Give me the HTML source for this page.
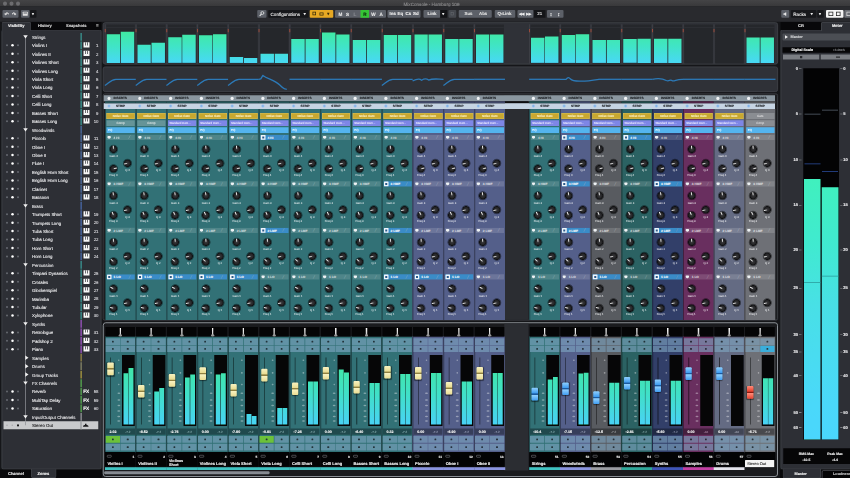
<!DOCTYPE html>
<html><head><meta charset="utf-8"><title>MixConsole - Hamburg 109</title>
<style>
html,body{margin:0;padding:0;background:#151619;}
body{width:850px;height:478px;overflow:hidden;position:relative;font-family:"Liberation Sans",sans-serif;text-rendering:geometricPrecision;}
#app{position:absolute;left:0;top:0;width:850px;height:478px;overflow:hidden;background:#151619;filter:contrast(1)}
#z{position:absolute;left:0;top:0;width:3400px;height:1912px;transform:scale(0.25);transform-origin:0 0;}
#z div,#z svg,#z i,#z b{position:absolute;font-style:normal;font-weight:normal;display:block}
#z .ch{top:0;width:0;height:0}
#z b{left:0;width:0;height:0}
#z .c0{--c:#327176;--d25:#265558;--d35:#20494d;--d45:#1c3e41;--d55:#163335;--l17:#4f8589;--l70:#c6d7d9;--l25:#659498;--l38:#80a7aa;--l45:#8eb1b4;--l62:#b1c9cb;--bc:#6192a5;--bg:#22333a;--st:#3fc3c2;}
#z .c1{--c:#545f8a;--d25:#3f4768;--d35:#373e5a;--d45:#2e344c;--d55:#262b3e;--l17:#6c759a;--l70:#cfd2de;--l25:#7f87a7;--l38:#959cb6;--l45:#a1a7bf;--l62:#bec2d3;--bc:#6e8bad;--bg:#26313d;--st:#8a94e0;}
#z .c2{--c:#585b60;--d25:#424448;--d35:#393b3e;--d45:#303235;--d55:#28292b;--l17:#6f7276;--l70:#d0d1d2;--l25:#828488;--l38:#97999c;--l45:#a3a5a8;--l62:#c0c1c3;--bc:#70899c;--bg:#273037;--st:#9a9ca2;}
#z .c3{--c:#2b6263;--d25:#204a4a;--d35:#1c4040;--d45:#183636;--d55:#132c2d;--l17:#497879;--l70:#c4d3d3;--l25:#60898a;--l38:#7c9e9e;--l45:#8aa9a9;--l62:#aec3c4;--bc:#5e8c9d;--bg:#213137;--st:#2fa89a;}
#z .c4{--c:#323f69;--d25:#262f4f;--d35:#202944;--d45:#1c233a;--d55:#161c2f;--l17:#4f5a7e;--l70:#c6c9d5;--l25:#656f8e;--l38:#8088a2;--l45:#8e95ac;--l62:#b1b6c6;--bc:#617ea0;--bg:#222c38;--st:#3f55b8;}
#z .c5{--c:#692f5f;--d25:#4f2347;--d35:#441f3e;--d45:#3a1a34;--d55:#2f152b;--l17:#7e4c75;--l70:#d5c5d2;--l25:#8e6387;--l38:#a27e9c;--l45:#ac8da7;--l62:#c6b0c2;--bc:#77789c;--bg:#2a2a37;--st:#c23fa2;}
#z .c6{--c:#646b83;--d25:#4b5062;--d35:#414655;--d45:#373b48;--d55:#2d303b;--l17:#7a8094;--l70:#d4d6dc;--l25:#8b90a2;--l38:#9fa3b2;--l45:#aaaebb;--l62:#c4c7d0;--bc:#7590aa;--bg:#29323b;--st:#e4e4ec;}
#z .c7{--c:#6e7076;--d25:#525458;--d35:#48494d;--d45:#3d3e41;--d55:#313235;--l17:#828489;--l70:#d6d7d9;--l25:#929498;--l38:#a5a6aa;--l45:#afb0b4;--l62:#c8c9cb;--bc:#7992a5;--bg:#2a333a;--st:#1a1b1e;}
#z .g1{background:linear-gradient(#40eaa0 0%,#40e4c8 50%,#48d8f6 100%);background-size:100% 127.6px;background-position:bottom;width:53.6px}
#z .g2{background:linear-gradient(#40e6a6 0%,#40e0c8 48%,#48d2f4 100%);background-size:100% 234px;background-position:bottom;width:19.6px}
#z .capy{left:13.2px;width:25.6px;height:50.4px;border-radius:4px;box-shadow:0 2.4px 4px 1.2px rgba(0,0,0,.45);background:linear-gradient(#f8f2c0 0%,#e9dc92 42%,#8f8040 47%,#8f8040 53%,#f8f2c0 58%,#e9dc92 100%)}
#z .capb{left:13.2px;width:25.6px;height:50.4px;border-radius:4px;box-shadow:0 2.4px 4px 1.2px rgba(0,0,0,.45);background:linear-gradient(#8fd0ff 0%,#3f9cf0 42%,#1a5aa0 47%,#1a5aa0 53%,#8fd0ff 58%,#3f9cf0 100%)}
#z .capr{left:13.2px;width:25.6px;height:50.4px;border-radius:4px;box-shadow:0 2.4px 4px 1.2px rgba(0,0,0,.45);background:linear-gradient(#ff8a78 0%,#e8422f 42%,#8a1a10 47%,#8a1a10 53%,#ff8a78 58%,#e8422f 100%)}
#z .mbg{left:9.6px;top:98.4px;width:112.4px;height:154.4px;background:#25272b;background-image:repeating-linear-gradient(#25272b 0,#25272b 9.6px,#2c2e33 9.6px,#2c2e33 12px)}
#z .msp{left:2.8px;top:96.8px;width:4px;height:157.6px;background:#3c3e44;}
#z .mrt{left:2.8px;top:116px;width:4px;height:12.8px;background:#9a4a3a;}
#z .r1{left:3.6px;top:405.2px;width:123.08px;height:7.6px;background:var(--d25);}
#z .r2{left:3.6px;top:435.6px;width:123.08px;height:844px;background:var(--c);}
#z .r3{left:3.6px;top:435.6px;width:4px;height:844px;background:var(--d35);}
#z .ic{left:13.6px;top:386.8px;width:12.8px;height:12.8px;background:#f2f4f6;border-radius:50%}
#z .it{left:38px;top:386.16px;font-size:12.4px;line-height:14.88px;color:#1d2024;white-space:nowrap;font-weight:bold;-webkit-text-stroke:0.48px;}
#z .sc{left:13.6px;top:417.6px;width:12.8px;height:12.8px;background:#7fb0e6;border-radius:50%;border:2px solid #a8c8ee;box-sizing:border-box}
#z .stx{left:9.6px;top:416.96px;font-size:12.4px;line-height:14.88px;color:#1d2024;white-space:nowrap;font-weight:bold;-webkit-text-stroke:0.48px;width:112.8px;text-align:center;}
#z .s1{left:10px;top:452px;width:112.8px;height:23.6px;background:#c8a830;border:2px solid #d6bd58;box-sizing:border-box}
#z .s1t{left:10px;top:456.8px;font-size:12px;line-height:14.4px;color:#f6e9b8;white-space:nowrap;font-weight:bold;-webkit-text-stroke:0.48px;width:112.8px;text-align:center;}
#z .s2c{left:10px;top:480.8px;width:112.8px;height:22.8px;background:var(--l25);}
#z .s2ct{left:10px;top:485.2px;font-size:12px;line-height:14.4px;color:#d4e0e0;white-space:nowrap;-webkit-text-stroke:0.4px;width:112.8px;text-align:center;}
#z .s3{left:10px;top:509.2px;width:112.8px;height:22.8px;background:#54b4ee;}
#z .s3t{left:16px;top:513.6px;font-size:12px;line-height:14.4px;color:#e8f6ff;white-space:nowrap;-webkit-text-stroke:0.4px;}
#z .bh{left:10px;top:-10.4px;width:112.8px;height:20.8px;background:var(--l17);}
#z .ba{background:#3a8cc8}
#z .bi{left:14.4px;top:-5.2px;width:12.8px;height:10.4px;background:#eef2f4;border-radius:2.4px 2.4px 5.6px 5.6px}
#z .bn{left:38.4px;top:-7.68px;font-size:12.8px;line-height:15.36px;color:var(--l70);white-space:nowrap;font-weight:bold;-webkit-text-stroke:0.48px;}
#z .bs{left:98px;top:-7.2px;font-size:12px;line-height:14.4px;color:var(--l45);white-space:nowrap;-webkit-text-stroke:0.4px;}
#z .k0{left:18.4px;top:27.2px;width:40px;height:40px;background:radial-gradient(circle closest-side at 50% 50%,#38383b 0,#28282a 40%,#19191b 60%,#101012 66%,var(--d55) 72%,var(--d35) 86%,var(--c) 100%);border-radius:50%}
#z .p0{left:36.4px;top:33.6px;width:4px;height:13.6px;background:linear-gradient(#fff,#d8d8d8 70%,rgba(200,200,200,.2));transform-origin:50% 100%;transform:rotate(-5deg)}
#z .l0{left:6.4px;top:70.48px;font-size:11.2px;line-height:13.44px;color:var(--l70);white-space:nowrap;-webkit-text-stroke:0.4px;width:64px;text-align:center;}
#z .k1{left:74.4px;top:83.6px;width:40px;height:40px;background:radial-gradient(circle closest-side at 50% 50%,#38383b 0,#28282a 40%,#19191b 60%,#101012 66%,var(--d55) 72%,var(--d35) 86%,var(--c) 100%);border-radius:50%}
#z .p1{left:92.4px;top:90px;width:4px;height:13.6px;background:linear-gradient(#fff,#d8d8d8 70%,rgba(200,200,200,.2));transform-origin:50% 100%;transform:rotate(-100deg)}
#z .l1{left:62.4px;top:125.28px;font-size:11.2px;line-height:13.44px;color:var(--l70);white-space:nowrap;-webkit-text-stroke:0.4px;width:64px;text-align:center;}
#z .k2{left:17.6px;top:105.2px;width:40px;height:40px;background:radial-gradient(circle closest-side at 50% 50%,#38383b 0,#28282a 40%,#19191b 60%,#101012 66%,var(--d55) 72%,var(--d35) 86%,var(--c) 100%);border-radius:50%}
#z .p2{left:35.6px;top:111.6px;width:4px;height:13.6px;background:linear-gradient(#fff,#d8d8d8 70%,rgba(200,200,200,.2));transform-origin:50% 100%;transform:rotate(78deg)}
#z .l2{left:5.6px;top:144.08px;font-size:11.2px;line-height:13.44px;color:var(--l70);white-space:nowrap;-webkit-text-stroke:0.4px;width:64px;text-align:center;}
#z .bk{left:12px;top:-9.2px;width:18.4px;height:18.4px;background:#f2f6fa;border-radius:2px}
#z .bk2{left:17.2px;top:-4px;width:8px;height:8px;background:#2a5a8a;}
#z .f1{left:3.6px;top:1345.6px;width:122.28px;height:464px;background:var(--c);}
#z .f2{left:3.6px;top:1345.6px;width:4px;height:464px;background:var(--d35);}
#z .f3{left:5.2px;top:1308px;width:118.8px;height:37.6px;background:#050506;}
#z .f4{left:62.8px;top:1312px;width:5.2px;height:32.8px;background:linear-gradient(#fff,#bbb);}
#z .f5{left:59.2px;top:1336.8px;width:12.4px;height:8px;background:#9a9a9a;border-radius:50% 50% 0 0}
#z .b00{left:6.8px;top:1352.8px;width:57.2px;height:28px;background:var(--bc);}
#z .d00{left:31.8px;top:1363.2px;width:7.2px;height:7.2px;background:var(--bg);border-radius:30%}
#z .b01{left:66.4px;top:1352.8px;width:57.2px;height:28px;background:var(--bc);}
#z .d01{left:91.4px;top:1363.2px;width:7.2px;height:7.2px;background:var(--bg);border-radius:30%}
#z .b10{left:6.8px;top:1383.2px;width:57.2px;height:24.8px;background:var(--bc);}
#z .d10{left:31.8px;top:1392px;width:7.2px;height:7.2px;background:var(--bg);border-radius:30%}
#z .b11{left:66.4px;top:1383.2px;width:57.2px;height:24.8px;background:var(--bc);}
#z .d11{left:91.4px;top:1392px;width:7.2px;height:7.2px;background:var(--bg);border-radius:30%}
#z .b20{left:6.8px;top:1743.6px;width:57.2px;height:27.2px;background:var(--bc);}
#z .d20{left:31.8px;top:1753.6px;width:7.2px;height:7.2px;background:var(--bg);border-radius:30%}
#z .b21{left:66.4px;top:1743.6px;width:57.2px;height:27.2px;background:var(--bc);}
#z .d21{left:91.4px;top:1753.6px;width:7.2px;height:7.2px;background:var(--bg);border-radius:30%}
#z .b30{left:6.8px;top:1774.8px;width:57.2px;height:27.6px;background:var(--bc);}
#z .d30{left:31.8px;top:1785px;width:7.2px;height:7.2px;background:var(--bg);border-radius:30%}
#z .b31{left:66.4px;top:1774.8px;width:57.2px;height:27.6px;background:var(--bc);}
#z .d31{left:91.4px;top:1785px;width:7.2px;height:7.2px;background:var(--bg);border-radius:30%}
#z .ft{left:24.8px;top:1430px;width:3.2px;height:268px;background:var(--d55);}
#z .m0{left:56px;top:1438px;width:6.4px;height:6.4px;background:var(--l38);border-radius:40%}
#z .m1{left:56px;top:1488.4px;width:6.4px;height:6.4px;background:var(--l38);border-radius:40%}
#z .m2{left:56px;top:1534.8px;width:6.4px;height:6.4px;background:var(--l38);border-radius:40%}
#z .m3{left:53.6px;top:1570px;width:11.2px;height:6.4px;background:var(--l38);border-radius:40%}
#z .m4{left:53.6px;top:1596.8px;width:11.2px;height:6.4px;background:var(--l38);border-radius:40%}
#z .m5{left:53.6px;top:1618.8px;width:11.2px;height:6.4px;background:var(--l38);border-radius:40%}
#z .m6{left:53.2px;top:1640.8px;width:12px;height:6.4px;background:var(--l38);border-radius:40%}
#z .m7{left:53.2px;top:1662.8px;width:12px;height:6.4px;background:var(--l38);border-radius:40%}
#z .m8{left:53.2px;top:1680.8px;width:12px;height:6.4px;background:var(--l38);border-radius:40%}
#z .fm{left:72px;top:1420px;width:51.2px;height:284.4px;background:#060607;}
#z .fv{left:6.8px;top:1714px;width:116.8px;height:24.8px;background:var(--d35);}
#z .fvt{left:6.8px;top:1717.76px;font-size:14.4px;line-height:17.28px;color:#f6f6f6;white-space:nowrap;font-weight:bold;-webkit-text-stroke:0.48px;width:58px;text-align:center;}
#z .fvu{left:66.4px;top:1719.2px;font-size:12px;line-height:14.4px;color:var(--l38);white-space:nowrap;-webkit-text-stroke:0.4px;width:57.2px;text-align:center;}
#z .fn{left:3.6px;top:1807.6px;width:122.28px;height:59.2px;background:#030304;}
#z .fi{left:12px;top:1820px;width:18.4px;height:10.4px;background:transparent;border:2.4px solid #8a8d92;border-radius:3.2px;box-sizing:border-box}
#z .fnum{left:80px;top:1817.52px;font-size:12.8px;line-height:15.36px;color:#e6e6e6;white-space:nowrap;font-weight:bold;-webkit-text-stroke:0.48px;width:41.2px;text-align:right;}
#z .nm{left:13.6px;top:1843.6px;font-size:16px;line-height:19.2px;color:#f4f4f4;white-space:nowrap;font-weight:bold;-webkit-text-stroke:0.48px;}
#z .fs{left:3.6px;top:1868.8px;width:124.28px;height:11.6px;background:var(--st);}
#z .s2{left:10px;top:480.8px;width:112.8px;height:22.8px;background:#7e86e6;}
#z .s2t{left:16px;top:485.44px;font-size:11.6px;line-height:13.92px;color:#e6e6ff;white-space:nowrap;-webkit-text-stroke:0.4px;}
#z .na{left:13.6px;top:1836.72px;font-size:14.8px;line-height:17.76px;color:#f2f2f2;white-space:nowrap;font-weight:bold;-webkit-text-stroke:0.48px;}
#z .nb{left:13.6px;top:1850.72px;font-size:14.8px;line-height:17.76px;color:#f2f2f2;white-space:nowrap;font-weight:bold;-webkit-text-stroke:0.48px;}
#z .s1g{left:10px;top:452px;width:112.8px;height:23.6px;background:#8a8d92;}
#z .s1gt{left:10px;top:456.8px;font-size:12px;line-height:14.4px;color:#d4d4d6;white-space:nowrap;-webkit-text-stroke:0.4px;width:112.8px;text-align:center;}
#z .s2g{left:10px;top:480.8px;width:112.8px;height:22.8px;background:#8a8d92;}
#z .s2gt{left:10px;top:485.2px;font-size:12px;line-height:14.4px;color:#d4d4d6;white-space:nowrap;-webkit-text-stroke:0.4px;width:112.8px;text-align:center;}
#z .so{left:4.8px;top:1840px;width:117.2px;height:30.4px;background:#f4f4f4;border-radius:2.4px;box-shadow:0 0 6px #000}
#z .sot{left:14px;top:1845.44px;font-size:15.6px;line-height:18.72px;color:#222;white-space:nowrap;-webkit-text-stroke:0.4px;}
</style></head><body><div id="app"><div id="z">
<div style="left:0px;top:0px;width:3400px;height:26.4px;background:linear-gradient(#444446,#38383a);"></div>
<div style="left:11.6px;top:6px;width:16.8px;height:16.8px;background:#6c6c6f;border-radius:50%"></div>
<div style="left:37.6px;top:6px;width:16.8px;height:16.8px;background:#6c6c6f;border-radius:50%"></div>
<div style="left:63.6px;top:6px;width:16.8px;height:16.8px;background:#6c6c6f;border-radius:50%"></div>
<div style="left:1614px;top:4.96px;font-size:18.4px;line-height:22.08px;color:#8e8e90;white-space:nowrap;-webkit-text-stroke:0.4px;">MixConsole - Hamburg 109</div>
<div style="left:0px;top:26.4px;width:3400px;height:60.4px;background:#292a2e;"></div>
<div style="left:10px;top:40px;width:64px;height:31.2px;background:#5c6068;border-radius:4px"></div>
<div style="left:18px;top:43.6px;font-size:20px;line-height:24px;color:#d8d8d8;white-space:nowrap;font-weight:bold;-webkit-text-stroke:0.48px;">&#8630;</div>
<div style="left:48px;top:43.6px;font-size:20px;line-height:24px;color:#d8d8d8;white-space:nowrap;font-weight:bold;-webkit-text-stroke:0.48px;">&#8631;</div>
<div style="left:84px;top:40px;width:34px;height:31.2px;background:#5c6068;border-radius:4px"></div>
<div style="left:91.2px;top:47.2px;width:20px;height:16px;background:#e0e0e0;border-radius:2px"></div>
<div style="left:94.4px;top:50.4px;width:13.6px;height:4px;background:#5c6068;"></div>
<div style="left:120px;top:40px;width:26px;height:31.2px;background:#17181b;border-radius:4px"></div>
<div style="left:127.6px;top:46.88px;font-size:15.2px;line-height:18.24px;color:#e8e8e8;white-space:nowrap;font-weight:bold;-webkit-text-stroke:0.48px;">&#9662;</div>
<div style="left:1029.2px;top:40px;width:36.4px;height:31.2px;background:#5c6068;border-radius:4px"></div>
<div style="left:1042.4px;top:44.8px;width:14.4px;height:14.4px;background:transparent;border:3.2px solid #f2f2f2;border-radius:50%;box-sizing:border-box"></div>
<div style="left:1036.8px;top:58.4px;width:10.4px;height:3.6px;background:#f2f2f2;transform:rotate(-45deg)"></div>
<div style="left:1072.8px;top:40px;width:162px;height:31.2px;background:#16171a;border-radius:4px"></div>
<div style="left:1082px;top:44.56px;font-size:18.4px;line-height:22.08px;color:#f0f0f0;white-space:nowrap;-webkit-text-stroke:0.4px;">Configurations</div>
<div style="left:1215.2px;top:46.88px;font-size:15.2px;line-height:18.24px;color:#f0f0f0;white-space:nowrap;font-weight:bold;-webkit-text-stroke:0.48px;">&#9662;</div>
<div style="left:1238.8px;top:40px;width:94px;height:31.2px;background:#e6a823;border-radius:4px"></div>
<div style="left:1250px;top:46.8px;width:14.4px;height:14.4px;background:transparent;border:3.2px solid #3a2c08;box-sizing:border-box"></div>
<div style="left:1278px;top:50.4px;width:16px;height:11.2px;background:transparent;border:3.2px solid #3a2c08;box-sizing:border-box"></div>
<div style="left:1309.2px;top:46.4px;font-size:16px;line-height:19.2px;color:#3a2c08;white-space:nowrap;font-weight:bold;-webkit-text-stroke:0.48px;">&#9662;</div>
<div style="left:1340px;top:40px;width:204px;height:31.2px;background:#5c6068;border-radius:4px"></div>
<div style="left:1354px;top:44.56px;font-size:18.4px;line-height:22.08px;color:#e6e6e6;white-space:nowrap;font-weight:bold;-webkit-text-stroke:0.48px;">M</div>
<div style="left:1384px;top:44.56px;font-size:18.4px;line-height:22.08px;color:#e6e6e6;white-space:nowrap;font-weight:bold;-webkit-text-stroke:0.48px;">S</div>
<div style="left:1414px;top:44.56px;font-size:18.4px;line-height:22.08px;color:#8a8d93;white-space:nowrap;font-weight:bold;-webkit-text-stroke:0.48px;">L</div>
<div style="left:1442px;top:40px;width:34.4px;height:31.2px;background:#35c435;"></div>
<div style="left:1452.8px;top:44.56px;font-size:18.4px;line-height:22.08px;color:#0a2a0a;white-space:nowrap;font-weight:bold;-webkit-text-stroke:0.48px;">R</div>
<div style="left:1484.8px;top:44.56px;font-size:18.4px;line-height:22.08px;color:#e6e6e6;white-space:nowrap;font-weight:bold;-webkit-text-stroke:0.48px;">W</div>
<div style="left:1518px;top:44.56px;font-size:18.4px;line-height:22.08px;color:#e6e6e6;white-space:nowrap;font-weight:bold;-webkit-text-stroke:0.48px;">A</div>
<div style="left:1550.4px;top:40px;width:132px;height:31.2px;background:#5c6068;border-radius:4px"></div>
<div style="left:1558px;top:45.04px;font-size:17.6px;line-height:21.12px;color:#ececec;white-space:nowrap;font-weight:bold;-webkit-text-stroke:0.48px;">Ins</div>
<div style="left:1590px;top:45.04px;font-size:17.6px;line-height:21.12px;color:#ececec;white-space:nowrap;font-weight:bold;-webkit-text-stroke:0.48px;">Eq</div>
<div style="left:1622px;top:45.04px;font-size:17.6px;line-height:21.12px;color:#ececec;white-space:nowrap;font-weight:bold;-webkit-text-stroke:0.48px;">Cs</div>
<div style="left:1652px;top:45.04px;font-size:17.6px;line-height:21.12px;color:#ececec;white-space:nowrap;font-weight:bold;-webkit-text-stroke:0.48px;">Sd</div>
<div style="left:1694px;top:40px;width:66.8px;height:31.2px;background:#5c6068;border-radius:4px"></div>
<div style="left:1710px;top:45.04px;font-size:17.6px;line-height:21.12px;color:#e4e4e4;white-space:nowrap;font-weight:bold;-webkit-text-stroke:0.48px;">Link</div>
<div style="left:1760.8px;top:40px;width:28.4px;height:31.2px;background:#121316;border-radius:0px"></div>
<div style="left:1769.2px;top:46.88px;font-size:15.2px;line-height:18.24px;color:#f0f0f0;white-space:nowrap;font-weight:bold;-webkit-text-stroke:0.48px;">&#9662;</div>
<div style="left:1794px;top:40px;width:31.2px;height:31.2px;background:#45484e;border-radius:4px"></div>
<div style="left:1803.2px;top:49.2px;width:12px;height:12px;background:transparent;border:2.4px solid #6a6d73;box-sizing:border-box"></div>
<div style="left:1835.2px;top:40px;width:132px;height:31.2px;background:#5c6068;border-radius:4px"></div>
<div style="left:1858px;top:45.04px;font-size:17.6px;line-height:21.12px;color:#dedede;white-space:nowrap;font-weight:bold;-webkit-text-stroke:0.48px;">Sus</div>
<div style="left:1916px;top:45.04px;font-size:17.6px;line-height:21.12px;color:#dedede;white-space:nowrap;font-weight:bold;-webkit-text-stroke:0.48px;">Abs</div>
<div style="left:1979.2px;top:40px;width:82px;height:31.2px;background:#5c6068;border-radius:4px"></div>
<div style="left:1990px;top:45.04px;font-size:17.6px;line-height:21.12px;color:#e4e4e4;white-space:nowrap;font-weight:bold;-webkit-text-stroke:0.48px;">Q-Link</div>
<div style="left:2070.4px;top:40px;width:63.6px;height:31.2px;background:#5c6068;border-radius:4px"></div>
<div style="left:2077.2px;top:47.92px;font-size:12.8px;line-height:15.36px;color:#f0f0f0;white-space:nowrap;font-weight:bold;-webkit-text-stroke:0.48px;">&#9664;&#9664;</div>
<div style="left:2105.2px;top:47.92px;font-size:12.8px;line-height:15.36px;color:#f0f0f0;white-space:nowrap;font-weight:bold;-webkit-text-stroke:0.48px;">&#9654;&#9654;</div>
<div style="left:2135.2px;top:40px;width:47.2px;height:31.2px;background:#141518;border-radius:0px"></div>
<div style="left:2149.2px;top:45.04px;font-size:17.6px;line-height:21.12px;color:#e8e8e8;white-space:nowrap;-webkit-text-stroke:0.4px;">21</div>
<div style="left:2188px;top:40px;width:66px;height:31.2px;background:#5c6068;border-radius:4px"></div>
<div style="left:2199.2px;top:43.6px;font-size:20px;line-height:24px;color:#fff;white-space:nowrap;font-weight:bold;-webkit-text-stroke:0.48px;">&#8597;</div>
<div style="left:2230px;top:43.6px;font-size:20px;line-height:24px;color:#fff;white-space:nowrap;font-weight:bold;-webkit-text-stroke:0.48px;">&#8597;</div>
<div style="left:3124.8px;top:40px;width:32.4px;height:31.2px;background:#5c6068;border-radius:4px"></div>
<div style="left:3133.2px;top:46.96px;font-size:14.4px;line-height:17.28px;color:#e8e8e8;white-space:nowrap;font-weight:bold;-webkit-text-stroke:0.48px;">&#9664;</div>
<div style="left:3164px;top:40px;width:100.8px;height:31.2px;background:#17181b;border-radius:4px"></div>
<div style="left:3173.2px;top:44.56px;font-size:18.4px;line-height:22.08px;color:#f0f0f0;white-space:nowrap;-webkit-text-stroke:0.4px;">Racks</div>
<div style="left:3243.2px;top:46.88px;font-size:15.2px;line-height:18.24px;color:#f0f0f0;white-space:nowrap;font-weight:bold;-webkit-text-stroke:0.48px;">&#9662;</div>
<div style="left:3269.2px;top:40px;width:26px;height:31.2px;background:#17181b;border-radius:4px"></div>
<div style="left:3276px;top:46.88px;font-size:15.2px;line-height:18.24px;color:#f0f0f0;white-space:nowrap;font-weight:bold;-webkit-text-stroke:0.48px;">&#9662;</div>
<div style="left:3304px;top:40px;width:69.6px;height:31.2px;background:#f4f4f4;border-radius:4px"></div>
<div style="left:3314.4px;top:47.2px;width:18.4px;height:16.8px;background:transparent;border:3.6px solid #222;box-sizing:border-box"></div>
<div style="left:3344px;top:47.2px;width:18.4px;height:16.8px;background:transparent;border:3.6px solid #222;box-sizing:border-box"></div>
<div style="left:3377.2px;top:40px;width:30.8px;height:31.2px;background:#6a6d73;border-radius:4px"></div>
<div style="left:3386px;top:47.2px;width:18.4px;height:16.8px;background:transparent;border:3.6px solid #ddd;box-sizing:border-box"></div>
<div style="left:6px;top:118px;width:400px;height:1760px;background:#2d2f35;border:3.2px solid #46484e;border-radius:8px;box-sizing:border-box"></div>
<div style="left:124px;top:88px;width:282px;height:32px;background:#08080a;"></div>
<div style="left:6px;top:88px;width:118.8px;height:36px;background:#2d2f35;border:3.2px solid #46484e;border-bottom:none;border-radius:8px 8px 0 0;box-sizing:border-box"></div>
<div style="left:32px;top:94.4px;font-size:16px;line-height:19.2px;color:#f4f4f4;white-space:nowrap;font-weight:bold;-webkit-text-stroke:0.48px;">Visibility</div>
<div style="left:152px;top:94.4px;font-size:16px;line-height:19.2px;color:#d8d8d8;white-space:nowrap;font-weight:bold;-webkit-text-stroke:0.48px;">History</div>
<div style="left:264px;top:94.4px;font-size:16px;line-height:19.2px;color:#d8d8d8;white-space:nowrap;font-weight:bold;-webkit-text-stroke:0.48px;">Snapshots</div>
<div style="left:384px;top:93.2px;font-size:18px;line-height:21.6px;color:#a0a0a0;white-space:nowrap;font-weight:bold;-webkit-text-stroke:0.48px;">&#8801;</div>
<div style="left:322px;top:132.12px;width:5.2px;height:30.96px;background:#3a9c96;"></div>
<div style="left:322px;top:165.88px;width:5.2px;height:30.96px;background:#3a9c96;"></div>
<div style="left:322px;top:199.64px;width:5.2px;height:30.96px;background:#3a9c96;"></div>
<div style="left:322px;top:233.44px;width:5.2px;height:30.96px;background:#3a9c96;"></div>
<div style="left:322px;top:267.2px;width:5.2px;height:30.96px;background:#3a9c96;"></div>
<div style="left:322px;top:300.96px;width:5.2px;height:30.96px;background:#3a9c96;"></div>
<div style="left:322px;top:334.76px;width:5.2px;height:30.96px;background:#3a9c96;"></div>
<div style="left:322px;top:368.52px;width:5.2px;height:30.96px;background:#3a9c96;"></div>
<div style="left:322px;top:402.28px;width:5.2px;height:30.96px;background:#3a9c96;"></div>
<div style="left:322px;top:436.08px;width:5.2px;height:30.96px;background:#3a9c96;"></div>
<div style="left:322px;top:469.84px;width:5.2px;height:30.96px;background:#3a9c96;"></div>
<div style="left:322px;top:503.6px;width:5.2px;height:30.96px;background:#4f70a6;"></div>
<div style="left:322px;top:537.36px;width:5.2px;height:30.96px;background:#4f70a6;"></div>
<div style="left:322px;top:571.16px;width:5.2px;height:30.96px;background:#4f70a6;"></div>
<div style="left:322px;top:604.92px;width:5.2px;height:30.96px;background:#4f70a6;"></div>
<div style="left:322px;top:638.68px;width:5.2px;height:30.96px;background:#4f70a6;"></div>
<div style="left:322px;top:672.48px;width:5.2px;height:30.96px;background:#4f70a6;"></div>
<div style="left:322px;top:706.24px;width:5.2px;height:30.96px;background:#4f70a6;"></div>
<div style="left:322px;top:740px;width:5.2px;height:30.96px;background:#4f70a6;"></div>
<div style="left:322px;top:773.8px;width:5.2px;height:30.96px;background:#4f70a6;"></div>
<div style="left:322px;top:807.56px;width:5.2px;height:30.96px;background:#4a6cae;"></div>
<div style="left:322px;top:841.32px;width:5.2px;height:30.96px;background:#4a6cae;"></div>
<div style="left:322px;top:875.08px;width:5.2px;height:30.96px;background:#4a6cae;"></div>
<div style="left:322px;top:908.88px;width:5.2px;height:30.96px;background:#4a6cae;"></div>
<div style="left:322px;top:942.64px;width:5.2px;height:30.96px;background:#4a6cae;"></div>
<div style="left:322px;top:976.4px;width:5.2px;height:30.96px;background:#4a6cae;"></div>
<div style="left:322px;top:1010.2px;width:5.2px;height:30.96px;background:#4a6cae;"></div>
<div style="left:322px;top:1043.96px;width:5.2px;height:30.96px;background:#3a9a98;"></div>
<div style="left:322px;top:1077.72px;width:5.2px;height:30.96px;background:#3a9a98;"></div>
<div style="left:322px;top:1111.52px;width:5.2px;height:30.96px;background:#3a9a98;"></div>
<div style="left:322px;top:1145.28px;width:5.2px;height:30.96px;background:#3a9a98;"></div>
<div style="left:322px;top:1179.04px;width:5.2px;height:30.96px;background:#3a9a98;"></div>
<div style="left:322px;top:1212.8px;width:5.2px;height:30.96px;background:#3a9a98;"></div>
<div style="left:322px;top:1246.6px;width:5.2px;height:30.96px;background:#3a9a98;"></div>
<div style="left:322px;top:1280.36px;width:5.2px;height:30.96px;background:#a055c8;"></div>
<div style="left:322px;top:1314.12px;width:5.2px;height:30.96px;background:#a055c8;"></div>
<div style="left:322px;top:1347.92px;width:5.2px;height:30.96px;background:#a055c8;"></div>
<div style="left:322px;top:1381.68px;width:5.2px;height:30.96px;background:#a055c8;"></div>
<div style="left:322px;top:1415.44px;width:5.2px;height:30.96px;background:#9a8a4a;"></div>
<div style="left:322px;top:1449.24px;width:5.2px;height:30.96px;background:#8a8a6a;"></div>
<div style="left:322px;top:1483px;width:5.2px;height:30.96px;background:#b0a040;"></div>
<div style="left:322px;top:1516.76px;width:5.2px;height:30.96px;background:#58b050;"></div>
<div style="left:322px;top:1550.52px;width:5.2px;height:30.96px;background:#58b050;"></div>
<div style="left:322px;top:1584.32px;width:5.2px;height:30.96px;background:#58b050;"></div>
<div style="left:322px;top:1618.08px;width:5.2px;height:30.96px;background:#58b050;"></div>
<div style="left:322px;top:1651.84px;width:5.2px;height:30.96px;background:#9a9ca0;"></div>
<div style="left:322px;top:1685.64px;width:5.2px;height:30.96px;background:#9a9ca0;"></div>
<div style="left:100.8px;top:147.6px;width:2.8px;height:1553.52px;background:#8e9096;"></div>
<div style="left:92.8px;top:141.2px;width:0;height:0;border-left:9.2px solid transparent;border-right:9.2px solid transparent;border-top:13.6px solid #f2f2f2"></div>
<div style="left:128px;top:138.76px;font-size:17.4px;line-height:20.88px;color:#e6e6e8;white-space:nowrap;-webkit-text-stroke:0.4px;">Strings</div>
<div style="left:24px;top:177.36px;width:8px;height:8px;background:#666970;border-radius:50%"></div>
<div style="left:44.6px;top:176.36px;width:10px;height:10px;background:#ffffff;border-radius:50%"></div>
<div style="left:68px;top:177.36px;width:8px;height:8px;background:#666970;border-radius:50%"></div>
<div style="left:128px;top:172.52px;font-size:17.4px;line-height:20.88px;color:#f0f0f2;white-space:nowrap;-webkit-text-stroke:0.4px;">Violins I</div>
<div style="left:334.4px;top:169.36px;width:24px;height:20.8px;background:#f6f6f6;border-radius:1.2px"></div>
<div style="left:341.2px;top:169.36px;width:2.4px;height:12.8px;background:#3a3c42;"></div>
<div style="left:349.2px;top:169.36px;width:2.4px;height:12.8px;background:#3a3c42;"></div>
<div style="left:360px;top:172.24px;font-size:17.2px;line-height:20.64px;color:#dcdce0;white-space:nowrap;-webkit-text-stroke:0.4px;width:34px;text-align:right;">1</div>
<div style="left:24px;top:211.16px;width:8px;height:8px;background:#666970;border-radius:50%"></div>
<div style="left:44.6px;top:210.16px;width:10px;height:10px;background:#ffffff;border-radius:50%"></div>
<div style="left:68px;top:211.16px;width:8px;height:8px;background:#666970;border-radius:50%"></div>
<div style="left:128px;top:206.32px;font-size:17.4px;line-height:20.88px;color:#f0f0f2;white-space:nowrap;-webkit-text-stroke:0.4px;">Violines II</div>
<div style="left:334.4px;top:203.16px;width:24px;height:20.8px;background:#f6f6f6;border-radius:1.2px"></div>
<div style="left:341.2px;top:203.16px;width:2.4px;height:12.8px;background:#3a3c42;"></div>
<div style="left:349.2px;top:203.16px;width:2.4px;height:12.8px;background:#3a3c42;"></div>
<div style="left:360px;top:206.04px;font-size:17.2px;line-height:20.64px;color:#dcdce0;white-space:nowrap;-webkit-text-stroke:0.4px;width:34px;text-align:right;">2</div>
<div style="left:24px;top:244.92px;width:8px;height:8px;background:#666970;border-radius:50%"></div>
<div style="left:44.6px;top:243.92px;width:10px;height:10px;background:#ffffff;border-radius:50%"></div>
<div style="left:68px;top:244.92px;width:8px;height:8px;background:#666970;border-radius:50%"></div>
<div style="left:128px;top:240.08px;font-size:17.4px;line-height:20.88px;color:#f0f0f2;white-space:nowrap;-webkit-text-stroke:0.4px;">Violines Short</div>
<div style="left:334.4px;top:236.92px;width:24px;height:20.8px;background:#f6f6f6;border-radius:1.2px"></div>
<div style="left:341.2px;top:236.92px;width:2.4px;height:12.8px;background:#3a3c42;"></div>
<div style="left:349.2px;top:236.92px;width:2.4px;height:12.8px;background:#3a3c42;"></div>
<div style="left:360px;top:239.8px;font-size:17.2px;line-height:20.64px;color:#dcdce0;white-space:nowrap;-webkit-text-stroke:0.4px;width:34px;text-align:right;">3</div>
<div style="left:24px;top:278.68px;width:8px;height:8px;background:#666970;border-radius:50%"></div>
<div style="left:44.6px;top:277.68px;width:10px;height:10px;background:#ffffff;border-radius:50%"></div>
<div style="left:68px;top:278.68px;width:8px;height:8px;background:#666970;border-radius:50%"></div>
<div style="left:128px;top:273.84px;font-size:17.4px;line-height:20.88px;color:#f0f0f2;white-space:nowrap;-webkit-text-stroke:0.4px;">Violines Long</div>
<div style="left:334.4px;top:270.68px;width:24px;height:20.8px;background:#f6f6f6;border-radius:1.2px"></div>
<div style="left:341.2px;top:270.68px;width:2.4px;height:12.8px;background:#3a3c42;"></div>
<div style="left:349.2px;top:270.68px;width:2.4px;height:12.8px;background:#3a3c42;"></div>
<div style="left:360px;top:273.56px;font-size:17.2px;line-height:20.64px;color:#dcdce0;white-space:nowrap;-webkit-text-stroke:0.4px;width:34px;text-align:right;">4</div>
<div style="left:24px;top:312.44px;width:8px;height:8px;background:#666970;border-radius:50%"></div>
<div style="left:44.6px;top:311.44px;width:10px;height:10px;background:#ffffff;border-radius:50%"></div>
<div style="left:68px;top:312.44px;width:8px;height:8px;background:#666970;border-radius:50%"></div>
<div style="left:128px;top:307.64px;font-size:17.4px;line-height:20.88px;color:#f0f0f2;white-space:nowrap;-webkit-text-stroke:0.4px;">Viola Short</div>
<div style="left:334.4px;top:304.44px;width:24px;height:20.8px;background:#f6f6f6;border-radius:1.2px"></div>
<div style="left:341.2px;top:304.44px;width:2.4px;height:12.8px;background:#3a3c42;"></div>
<div style="left:349.2px;top:304.44px;width:2.4px;height:12.8px;background:#3a3c42;"></div>
<div style="left:360px;top:307.32px;font-size:17.2px;line-height:20.64px;color:#dcdce0;white-space:nowrap;-webkit-text-stroke:0.4px;width:34px;text-align:right;">5</div>
<div style="left:24px;top:346.24px;width:8px;height:8px;background:#666970;border-radius:50%"></div>
<div style="left:44.6px;top:345.24px;width:10px;height:10px;background:#ffffff;border-radius:50%"></div>
<div style="left:68px;top:346.24px;width:8px;height:8px;background:#666970;border-radius:50%"></div>
<div style="left:128px;top:341.4px;font-size:17.4px;line-height:20.88px;color:#f0f0f2;white-space:nowrap;-webkit-text-stroke:0.4px;">Viola Long</div>
<div style="left:334.4px;top:338.24px;width:24px;height:20.8px;background:#f6f6f6;border-radius:1.2px"></div>
<div style="left:341.2px;top:338.24px;width:2.4px;height:12.8px;background:#3a3c42;"></div>
<div style="left:349.2px;top:338.24px;width:2.4px;height:12.8px;background:#3a3c42;"></div>
<div style="left:360px;top:341.12px;font-size:17.2px;line-height:20.64px;color:#dcdce0;white-space:nowrap;-webkit-text-stroke:0.4px;width:34px;text-align:right;">6</div>
<div style="left:24px;top:380px;width:8px;height:8px;background:#666970;border-radius:50%"></div>
<div style="left:44.6px;top:379px;width:10px;height:10px;background:#ffffff;border-radius:50%"></div>
<div style="left:68px;top:380px;width:8px;height:8px;background:#666970;border-radius:50%"></div>
<div style="left:128px;top:375.16px;font-size:17.4px;line-height:20.88px;color:#f0f0f2;white-space:nowrap;-webkit-text-stroke:0.4px;">Celli Short</div>
<div style="left:334.4px;top:372px;width:24px;height:20.8px;background:#f6f6f6;border-radius:1.2px"></div>
<div style="left:341.2px;top:372px;width:2.4px;height:12.8px;background:#3a3c42;"></div>
<div style="left:349.2px;top:372px;width:2.4px;height:12.8px;background:#3a3c42;"></div>
<div style="left:360px;top:374.88px;font-size:17.2px;line-height:20.64px;color:#dcdce0;white-space:nowrap;-webkit-text-stroke:0.4px;width:34px;text-align:right;">7</div>
<div style="left:24px;top:413.76px;width:8px;height:8px;background:#666970;border-radius:50%"></div>
<div style="left:44.6px;top:412.76px;width:10px;height:10px;background:#ffffff;border-radius:50%"></div>
<div style="left:68px;top:413.76px;width:8px;height:8px;background:#666970;border-radius:50%"></div>
<div style="left:128px;top:408.92px;font-size:17.4px;line-height:20.88px;color:#f0f0f2;white-space:nowrap;-webkit-text-stroke:0.4px;">Celli Long</div>
<div style="left:334.4px;top:405.76px;width:24px;height:20.8px;background:#f6f6f6;border-radius:1.2px"></div>
<div style="left:341.2px;top:405.76px;width:2.4px;height:12.8px;background:#3a3c42;"></div>
<div style="left:349.2px;top:405.76px;width:2.4px;height:12.8px;background:#3a3c42;"></div>
<div style="left:360px;top:408.64px;font-size:17.2px;line-height:20.64px;color:#dcdce0;white-space:nowrap;-webkit-text-stroke:0.4px;width:34px;text-align:right;">8</div>
<div style="left:24px;top:447.56px;width:8px;height:8px;background:#666970;border-radius:50%"></div>
<div style="left:44.6px;top:446.56px;width:10px;height:10px;background:#ffffff;border-radius:50%"></div>
<div style="left:68px;top:447.56px;width:8px;height:8px;background:#666970;border-radius:50%"></div>
<div style="left:128px;top:442.72px;font-size:17.4px;line-height:20.88px;color:#f0f0f2;white-space:nowrap;-webkit-text-stroke:0.4px;">Basses Short</div>
<div style="left:334.4px;top:439.56px;width:24px;height:20.8px;background:#f6f6f6;border-radius:1.2px"></div>
<div style="left:341.2px;top:439.56px;width:2.4px;height:12.8px;background:#3a3c42;"></div>
<div style="left:349.2px;top:439.56px;width:2.4px;height:12.8px;background:#3a3c42;"></div>
<div style="left:360px;top:442.44px;font-size:17.2px;line-height:20.64px;color:#dcdce0;white-space:nowrap;-webkit-text-stroke:0.4px;width:34px;text-align:right;">9</div>
<div style="left:24px;top:481.32px;width:8px;height:8px;background:#666970;border-radius:50%"></div>
<div style="left:44.6px;top:480.32px;width:10px;height:10px;background:#ffffff;border-radius:50%"></div>
<div style="left:68px;top:481.32px;width:8px;height:8px;background:#666970;border-radius:50%"></div>
<div style="left:128px;top:476.48px;font-size:17.4px;line-height:20.88px;color:#f0f0f2;white-space:nowrap;-webkit-text-stroke:0.4px;">Basses Long</div>
<div style="left:334.4px;top:473.32px;width:24px;height:20.8px;background:#f6f6f6;border-radius:1.2px"></div>
<div style="left:341.2px;top:473.32px;width:2.4px;height:12.8px;background:#3a3c42;"></div>
<div style="left:349.2px;top:473.32px;width:2.4px;height:12.8px;background:#3a3c42;"></div>
<div style="left:360px;top:476.2px;font-size:17.2px;line-height:20.64px;color:#dcdce0;white-space:nowrap;-webkit-text-stroke:0.4px;width:34px;text-align:right;">10</div>
<div style="left:92.8px;top:512.68px;width:0;height:0;border-left:9.2px solid transparent;border-right:9.2px solid transparent;border-top:13.6px solid #f2f2f2"></div>
<div style="left:128px;top:510.24px;font-size:17.4px;line-height:20.88px;color:#e6e6e8;white-space:nowrap;-webkit-text-stroke:0.4px;">Woodwinds</div>
<div style="left:24px;top:548.88px;width:8px;height:8px;background:#666970;border-radius:50%"></div>
<div style="left:44.6px;top:547.88px;width:10px;height:10px;background:#ffffff;border-radius:50%"></div>
<div style="left:68px;top:548.88px;width:8px;height:8px;background:#666970;border-radius:50%"></div>
<div style="left:128px;top:544.04px;font-size:17.4px;line-height:20.88px;color:#f0f0f2;white-space:nowrap;-webkit-text-stroke:0.4px;">Piccolo</div>
<div style="left:334.4px;top:540.88px;width:24px;height:20.8px;background:#f6f6f6;border-radius:1.2px"></div>
<div style="left:341.2px;top:540.88px;width:2.4px;height:12.8px;background:#3a3c42;"></div>
<div style="left:349.2px;top:540.88px;width:2.4px;height:12.8px;background:#3a3c42;"></div>
<div style="left:360px;top:543.76px;font-size:17.2px;line-height:20.64px;color:#dcdce0;white-space:nowrap;-webkit-text-stroke:0.4px;width:34px;text-align:right;">11</div>
<div style="left:24px;top:582.64px;width:8px;height:8px;background:#666970;border-radius:50%"></div>
<div style="left:44.6px;top:581.64px;width:10px;height:10px;background:#ffffff;border-radius:50%"></div>
<div style="left:68px;top:582.64px;width:8px;height:8px;background:#666970;border-radius:50%"></div>
<div style="left:128px;top:577.8px;font-size:17.4px;line-height:20.88px;color:#f0f0f2;white-space:nowrap;-webkit-text-stroke:0.4px;">Oboe I</div>
<div style="left:334.4px;top:574.64px;width:24px;height:20.8px;background:#f6f6f6;border-radius:1.2px"></div>
<div style="left:341.2px;top:574.64px;width:2.4px;height:12.8px;background:#3a3c42;"></div>
<div style="left:349.2px;top:574.64px;width:2.4px;height:12.8px;background:#3a3c42;"></div>
<div style="left:360px;top:577.52px;font-size:17.2px;line-height:20.64px;color:#dcdce0;white-space:nowrap;-webkit-text-stroke:0.4px;width:34px;text-align:right;">12</div>
<div style="left:24px;top:616.4px;width:8px;height:8px;background:#666970;border-radius:50%"></div>
<div style="left:44.6px;top:615.4px;width:10px;height:10px;background:#ffffff;border-radius:50%"></div>
<div style="left:68px;top:616.4px;width:8px;height:8px;background:#666970;border-radius:50%"></div>
<div style="left:128px;top:611.56px;font-size:17.4px;line-height:20.88px;color:#f0f0f2;white-space:nowrap;-webkit-text-stroke:0.4px;">Oboe II</div>
<div style="left:334.4px;top:608.4px;width:24px;height:20.8px;background:#f6f6f6;border-radius:1.2px"></div>
<div style="left:341.2px;top:608.4px;width:2.4px;height:12.8px;background:#3a3c42;"></div>
<div style="left:349.2px;top:608.4px;width:2.4px;height:12.8px;background:#3a3c42;"></div>
<div style="left:360px;top:611.28px;font-size:17.2px;line-height:20.64px;color:#dcdce0;white-space:nowrap;-webkit-text-stroke:0.4px;width:34px;text-align:right;">13</div>
<div style="left:24px;top:650.16px;width:8px;height:8px;background:#666970;border-radius:50%"></div>
<div style="left:44.6px;top:649.16px;width:10px;height:10px;background:#ffffff;border-radius:50%"></div>
<div style="left:68px;top:650.16px;width:8px;height:8px;background:#666970;border-radius:50%"></div>
<div style="left:128px;top:645.32px;font-size:17.4px;line-height:20.88px;color:#f0f0f2;white-space:nowrap;-webkit-text-stroke:0.4px;">Flute I</div>
<div style="left:334.4px;top:642.16px;width:24px;height:20.8px;background:#f6f6f6;border-radius:1.2px"></div>
<div style="left:341.2px;top:642.16px;width:2.4px;height:12.8px;background:#3a3c42;"></div>
<div style="left:349.2px;top:642.16px;width:2.4px;height:12.8px;background:#3a3c42;"></div>
<div style="left:360px;top:645.04px;font-size:17.2px;line-height:20.64px;color:#dcdce0;white-space:nowrap;-webkit-text-stroke:0.4px;width:34px;text-align:right;">14</div>
<div style="left:24px;top:683.96px;width:8px;height:8px;background:#666970;border-radius:50%"></div>
<div style="left:44.6px;top:682.96px;width:10px;height:10px;background:#ffffff;border-radius:50%"></div>
<div style="left:68px;top:683.96px;width:8px;height:8px;background:#666970;border-radius:50%"></div>
<div style="left:128px;top:679.12px;font-size:17.4px;line-height:20.88px;color:#f0f0f2;white-space:nowrap;-webkit-text-stroke:0.4px;">English Horn Short</div>
<div style="left:334.4px;top:675.96px;width:24px;height:20.8px;background:#f6f6f6;border-radius:1.2px"></div>
<div style="left:341.2px;top:675.96px;width:2.4px;height:12.8px;background:#3a3c42;"></div>
<div style="left:349.2px;top:675.96px;width:2.4px;height:12.8px;background:#3a3c42;"></div>
<div style="left:360px;top:678.84px;font-size:17.2px;line-height:20.64px;color:#dcdce0;white-space:nowrap;-webkit-text-stroke:0.4px;width:34px;text-align:right;">15</div>
<div style="left:24px;top:717.72px;width:8px;height:8px;background:#666970;border-radius:50%"></div>
<div style="left:44.6px;top:716.72px;width:10px;height:10px;background:#ffffff;border-radius:50%"></div>
<div style="left:68px;top:717.72px;width:8px;height:8px;background:#666970;border-radius:50%"></div>
<div style="left:128px;top:712.88px;font-size:17.4px;line-height:20.88px;color:#f0f0f2;white-space:nowrap;-webkit-text-stroke:0.4px;">English Horn Long</div>
<div style="left:334.4px;top:709.72px;width:24px;height:20.8px;background:#f6f6f6;border-radius:1.2px"></div>
<div style="left:341.2px;top:709.72px;width:2.4px;height:12.8px;background:#3a3c42;"></div>
<div style="left:349.2px;top:709.72px;width:2.4px;height:12.8px;background:#3a3c42;"></div>
<div style="left:360px;top:712.6px;font-size:17.2px;line-height:20.64px;color:#dcdce0;white-space:nowrap;-webkit-text-stroke:0.4px;width:34px;text-align:right;">16</div>
<div style="left:24px;top:751.48px;width:8px;height:8px;background:#666970;border-radius:50%"></div>
<div style="left:44.6px;top:750.48px;width:10px;height:10px;background:#ffffff;border-radius:50%"></div>
<div style="left:68px;top:751.48px;width:8px;height:8px;background:#666970;border-radius:50%"></div>
<div style="left:128px;top:746.64px;font-size:17.4px;line-height:20.88px;color:#f0f0f2;white-space:nowrap;-webkit-text-stroke:0.4px;">Clarinet</div>
<div style="left:334.4px;top:743.48px;width:24px;height:20.8px;background:#f6f6f6;border-radius:1.2px"></div>
<div style="left:341.2px;top:743.48px;width:2.4px;height:12.8px;background:#3a3c42;"></div>
<div style="left:349.2px;top:743.48px;width:2.4px;height:12.8px;background:#3a3c42;"></div>
<div style="left:360px;top:746.36px;font-size:17.2px;line-height:20.64px;color:#dcdce0;white-space:nowrap;-webkit-text-stroke:0.4px;width:34px;text-align:right;">17</div>
<div style="left:24px;top:785.28px;width:8px;height:8px;background:#666970;border-radius:50%"></div>
<div style="left:44.6px;top:784.28px;width:10px;height:10px;background:#ffffff;border-radius:50%"></div>
<div style="left:68px;top:785.28px;width:8px;height:8px;background:#666970;border-radius:50%"></div>
<div style="left:128px;top:780.44px;font-size:17.4px;line-height:20.88px;color:#f0f0f2;white-space:nowrap;-webkit-text-stroke:0.4px;">Bassoon</div>
<div style="left:334.4px;top:777.28px;width:24px;height:20.8px;background:#f6f6f6;border-radius:1.2px"></div>
<div style="left:341.2px;top:777.28px;width:2.4px;height:12.8px;background:#3a3c42;"></div>
<div style="left:349.2px;top:777.28px;width:2.4px;height:12.8px;background:#3a3c42;"></div>
<div style="left:360px;top:780.16px;font-size:17.2px;line-height:20.64px;color:#dcdce0;white-space:nowrap;-webkit-text-stroke:0.4px;width:34px;text-align:right;">18</div>
<div style="left:92.8px;top:816.64px;width:0;height:0;border-left:9.2px solid transparent;border-right:9.2px solid transparent;border-top:13.6px solid #f2f2f2"></div>
<div style="left:128px;top:814.2px;font-size:17.4px;line-height:20.88px;color:#e6e6e8;white-space:nowrap;-webkit-text-stroke:0.4px;">Brass</div>
<div style="left:24px;top:852.8px;width:8px;height:8px;background:#666970;border-radius:50%"></div>
<div style="left:44.6px;top:851.8px;width:10px;height:10px;background:#ffffff;border-radius:50%"></div>
<div style="left:68px;top:852.8px;width:8px;height:8px;background:#666970;border-radius:50%"></div>
<div style="left:128px;top:847.96px;font-size:17.4px;line-height:20.88px;color:#f0f0f2;white-space:nowrap;-webkit-text-stroke:0.4px;">Trumpets Short</div>
<div style="left:334.4px;top:844.8px;width:24px;height:20.8px;background:#f6f6f6;border-radius:1.2px"></div>
<div style="left:341.2px;top:844.8px;width:2.4px;height:12.8px;background:#3a3c42;"></div>
<div style="left:349.2px;top:844.8px;width:2.4px;height:12.8px;background:#3a3c42;"></div>
<div style="left:360px;top:847.68px;font-size:17.2px;line-height:20.64px;color:#dcdce0;white-space:nowrap;-webkit-text-stroke:0.4px;width:34px;text-align:right;">19</div>
<div style="left:24px;top:886.6px;width:8px;height:8px;background:#666970;border-radius:50%"></div>
<div style="left:44.6px;top:885.6px;width:10px;height:10px;background:#ffffff;border-radius:50%"></div>
<div style="left:68px;top:886.6px;width:8px;height:8px;background:#666970;border-radius:50%"></div>
<div style="left:128px;top:881.76px;font-size:17.4px;line-height:20.88px;color:#f0f0f2;white-space:nowrap;-webkit-text-stroke:0.4px;">Trumpets Long</div>
<div style="left:334.4px;top:878.6px;width:24px;height:20.8px;background:#f6f6f6;border-radius:1.2px"></div>
<div style="left:341.2px;top:878.6px;width:2.4px;height:12.8px;background:#3a3c42;"></div>
<div style="left:349.2px;top:878.6px;width:2.4px;height:12.8px;background:#3a3c42;"></div>
<div style="left:360px;top:881.48px;font-size:17.2px;line-height:20.64px;color:#dcdce0;white-space:nowrap;-webkit-text-stroke:0.4px;width:34px;text-align:right;">20</div>
<div style="left:24px;top:920.36px;width:8px;height:8px;background:#666970;border-radius:50%"></div>
<div style="left:44.6px;top:919.36px;width:10px;height:10px;background:#ffffff;border-radius:50%"></div>
<div style="left:68px;top:920.36px;width:8px;height:8px;background:#666970;border-radius:50%"></div>
<div style="left:128px;top:915.52px;font-size:17.4px;line-height:20.88px;color:#f0f0f2;white-space:nowrap;-webkit-text-stroke:0.4px;">Tuba Short</div>
<div style="left:334.4px;top:912.36px;width:24px;height:20.8px;background:#f6f6f6;border-radius:1.2px"></div>
<div style="left:341.2px;top:912.36px;width:2.4px;height:12.8px;background:#3a3c42;"></div>
<div style="left:349.2px;top:912.36px;width:2.4px;height:12.8px;background:#3a3c42;"></div>
<div style="left:360px;top:915.24px;font-size:17.2px;line-height:20.64px;color:#dcdce0;white-space:nowrap;-webkit-text-stroke:0.4px;width:34px;text-align:right;">21</div>
<div style="left:24px;top:954.12px;width:8px;height:8px;background:#666970;border-radius:50%"></div>
<div style="left:44.6px;top:953.12px;width:10px;height:10px;background:#ffffff;border-radius:50%"></div>
<div style="left:68px;top:954.12px;width:8px;height:8px;background:#666970;border-radius:50%"></div>
<div style="left:128px;top:949.28px;font-size:17.4px;line-height:20.88px;color:#f0f0f2;white-space:nowrap;-webkit-text-stroke:0.4px;">Tuba Long</div>
<div style="left:334.4px;top:946.12px;width:24px;height:20.8px;background:#f6f6f6;border-radius:1.2px"></div>
<div style="left:341.2px;top:946.12px;width:2.4px;height:12.8px;background:#3a3c42;"></div>
<div style="left:349.2px;top:946.12px;width:2.4px;height:12.8px;background:#3a3c42;"></div>
<div style="left:360px;top:949px;font-size:17.2px;line-height:20.64px;color:#dcdce0;white-space:nowrap;-webkit-text-stroke:0.4px;width:34px;text-align:right;">22</div>
<div style="left:24px;top:987.88px;width:8px;height:8px;background:#666970;border-radius:50%"></div>
<div style="left:44.6px;top:986.88px;width:10px;height:10px;background:#ffffff;border-radius:50%"></div>
<div style="left:68px;top:987.88px;width:8px;height:8px;background:#666970;border-radius:50%"></div>
<div style="left:128px;top:983.04px;font-size:17.4px;line-height:20.88px;color:#f0f0f2;white-space:nowrap;-webkit-text-stroke:0.4px;">Horn Short</div>
<div style="left:334.4px;top:979.88px;width:24px;height:20.8px;background:#f6f6f6;border-radius:1.2px"></div>
<div style="left:341.2px;top:979.88px;width:2.4px;height:12.8px;background:#3a3c42;"></div>
<div style="left:349.2px;top:979.88px;width:2.4px;height:12.8px;background:#3a3c42;"></div>
<div style="left:360px;top:982.76px;font-size:17.2px;line-height:20.64px;color:#dcdce0;white-space:nowrap;-webkit-text-stroke:0.4px;width:34px;text-align:right;">23</div>
<div style="left:24px;top:1021.68px;width:8px;height:8px;background:#666970;border-radius:50%"></div>
<div style="left:44.6px;top:1020.68px;width:10px;height:10px;background:#ffffff;border-radius:50%"></div>
<div style="left:68px;top:1021.68px;width:8px;height:8px;background:#666970;border-radius:50%"></div>
<div style="left:128px;top:1016.84px;font-size:17.4px;line-height:20.88px;color:#f0f0f2;white-space:nowrap;-webkit-text-stroke:0.4px;">Horn Long</div>
<div style="left:334.4px;top:1013.68px;width:24px;height:20.8px;background:#f6f6f6;border-radius:1.2px"></div>
<div style="left:341.2px;top:1013.68px;width:2.4px;height:12.8px;background:#3a3c42;"></div>
<div style="left:349.2px;top:1013.68px;width:2.4px;height:12.8px;background:#3a3c42;"></div>
<div style="left:360px;top:1016.56px;font-size:17.2px;line-height:20.64px;color:#dcdce0;white-space:nowrap;-webkit-text-stroke:0.4px;width:34px;text-align:right;">24</div>
<div style="left:92.8px;top:1053.04px;width:0;height:0;border-left:9.2px solid transparent;border-right:9.2px solid transparent;border-top:13.6px solid #f2f2f2"></div>
<div style="left:128px;top:1050.6px;font-size:17.4px;line-height:20.88px;color:#e6e6e8;white-space:nowrap;-webkit-text-stroke:0.4px;">Percussion</div>
<div style="left:24px;top:1089.2px;width:8px;height:8px;background:#666970;border-radius:50%"></div>
<div style="left:44.6px;top:1088.2px;width:10px;height:10px;background:#ffffff;border-radius:50%"></div>
<div style="left:68px;top:1089.2px;width:8px;height:8px;background:#666970;border-radius:50%"></div>
<div style="left:128px;top:1084.36px;font-size:17.4px;line-height:20.88px;color:#f0f0f2;white-space:nowrap;-webkit-text-stroke:0.4px;">Timpani Dynamics</div>
<div style="left:334.4px;top:1081.2px;width:24px;height:20.8px;background:#f6f6f6;border-radius:1.2px"></div>
<div style="left:341.2px;top:1081.2px;width:2.4px;height:12.8px;background:#3a3c42;"></div>
<div style="left:349.2px;top:1081.2px;width:2.4px;height:12.8px;background:#3a3c42;"></div>
<div style="left:360px;top:1084.08px;font-size:17.2px;line-height:20.64px;color:#dcdce0;white-space:nowrap;-webkit-text-stroke:0.4px;width:34px;text-align:right;">25</div>
<div style="left:24px;top:1123px;width:8px;height:8px;background:#666970;border-radius:50%"></div>
<div style="left:44.6px;top:1122px;width:10px;height:10px;background:#ffffff;border-radius:50%"></div>
<div style="left:68px;top:1123px;width:8px;height:8px;background:#666970;border-radius:50%"></div>
<div style="left:128px;top:1118.16px;font-size:17.4px;line-height:20.88px;color:#f0f0f2;white-space:nowrap;-webkit-text-stroke:0.4px;">Crotales</div>
<div style="left:334.4px;top:1115px;width:24px;height:20.8px;background:#f6f6f6;border-radius:1.2px"></div>
<div style="left:341.2px;top:1115px;width:2.4px;height:12.8px;background:#3a3c42;"></div>
<div style="left:349.2px;top:1115px;width:2.4px;height:12.8px;background:#3a3c42;"></div>
<div style="left:360px;top:1117.88px;font-size:17.2px;line-height:20.64px;color:#dcdce0;white-space:nowrap;-webkit-text-stroke:0.4px;width:34px;text-align:right;">26</div>
<div style="left:24px;top:1156.76px;width:8px;height:8px;background:#666970;border-radius:50%"></div>
<div style="left:44.6px;top:1155.76px;width:10px;height:10px;background:#ffffff;border-radius:50%"></div>
<div style="left:68px;top:1156.76px;width:8px;height:8px;background:#666970;border-radius:50%"></div>
<div style="left:128px;top:1151.92px;font-size:17.4px;line-height:20.88px;color:#f0f0f2;white-space:nowrap;-webkit-text-stroke:0.4px;">Glockenspiel</div>
<div style="left:334.4px;top:1148.76px;width:24px;height:20.8px;background:#f6f6f6;border-radius:1.2px"></div>
<div style="left:341.2px;top:1148.76px;width:2.4px;height:12.8px;background:#3a3c42;"></div>
<div style="left:349.2px;top:1148.76px;width:2.4px;height:12.8px;background:#3a3c42;"></div>
<div style="left:360px;top:1151.64px;font-size:17.2px;line-height:20.64px;color:#dcdce0;white-space:nowrap;-webkit-text-stroke:0.4px;width:34px;text-align:right;">27</div>
<div style="left:24px;top:1190.52px;width:8px;height:8px;background:#666970;border-radius:50%"></div>
<div style="left:44.6px;top:1189.52px;width:10px;height:10px;background:#ffffff;border-radius:50%"></div>
<div style="left:68px;top:1190.52px;width:8px;height:8px;background:#666970;border-radius:50%"></div>
<div style="left:128px;top:1185.68px;font-size:17.4px;line-height:20.88px;color:#f0f0f2;white-space:nowrap;-webkit-text-stroke:0.4px;">Marimba</div>
<div style="left:334.4px;top:1182.52px;width:24px;height:20.8px;background:#f6f6f6;border-radius:1.2px"></div>
<div style="left:341.2px;top:1182.52px;width:2.4px;height:12.8px;background:#3a3c42;"></div>
<div style="left:349.2px;top:1182.52px;width:2.4px;height:12.8px;background:#3a3c42;"></div>
<div style="left:360px;top:1185.4px;font-size:17.2px;line-height:20.64px;color:#dcdce0;white-space:nowrap;-webkit-text-stroke:0.4px;width:34px;text-align:right;">28</div>
<div style="left:24px;top:1224.32px;width:8px;height:8px;background:#666970;border-radius:50%"></div>
<div style="left:44.6px;top:1223.32px;width:10px;height:10px;background:#ffffff;border-radius:50%"></div>
<div style="left:68px;top:1224.32px;width:8px;height:8px;background:#666970;border-radius:50%"></div>
<div style="left:128px;top:1219.48px;font-size:17.4px;line-height:20.88px;color:#f0f0f2;white-space:nowrap;-webkit-text-stroke:0.4px;">Tubular</div>
<div style="left:334.4px;top:1216.32px;width:24px;height:20.8px;background:#f6f6f6;border-radius:1.2px"></div>
<div style="left:341.2px;top:1216.32px;width:2.4px;height:12.8px;background:#3a3c42;"></div>
<div style="left:349.2px;top:1216.32px;width:2.4px;height:12.8px;background:#3a3c42;"></div>
<div style="left:360px;top:1219.2px;font-size:17.2px;line-height:20.64px;color:#dcdce0;white-space:nowrap;-webkit-text-stroke:0.4px;width:34px;text-align:right;">29</div>
<div style="left:24px;top:1258.08px;width:8px;height:8px;background:#666970;border-radius:50%"></div>
<div style="left:44.6px;top:1257.08px;width:10px;height:10px;background:#ffffff;border-radius:50%"></div>
<div style="left:68px;top:1258.08px;width:8px;height:8px;background:#666970;border-radius:50%"></div>
<div style="left:128px;top:1253.24px;font-size:17.4px;line-height:20.88px;color:#f0f0f2;white-space:nowrap;-webkit-text-stroke:0.4px;">Xylophone</div>
<div style="left:334.4px;top:1250.08px;width:24px;height:20.8px;background:#f6f6f6;border-radius:1.2px"></div>
<div style="left:341.2px;top:1250.08px;width:2.4px;height:12.8px;background:#3a3c42;"></div>
<div style="left:349.2px;top:1250.08px;width:2.4px;height:12.8px;background:#3a3c42;"></div>
<div style="left:360px;top:1252.96px;font-size:17.2px;line-height:20.64px;color:#dcdce0;white-space:nowrap;-webkit-text-stroke:0.4px;width:34px;text-align:right;">30</div>
<div style="left:92.8px;top:1289.44px;width:0;height:0;border-left:9.2px solid transparent;border-right:9.2px solid transparent;border-top:13.6px solid #f2f2f2"></div>
<div style="left:128px;top:1287px;font-size:17.4px;line-height:20.88px;color:#e6e6e8;white-space:nowrap;-webkit-text-stroke:0.4px;">Synths</div>
<div style="left:24px;top:1325.6px;width:8px;height:8px;background:#666970;border-radius:50%"></div>
<div style="left:44.6px;top:1324.6px;width:10px;height:10px;background:#ffffff;border-radius:50%"></div>
<div style="left:68px;top:1325.6px;width:8px;height:8px;background:#666970;border-radius:50%"></div>
<div style="left:128px;top:1320.76px;font-size:17.4px;line-height:20.88px;color:#f0f0f2;white-space:nowrap;-webkit-text-stroke:0.4px;">Retrologue</div>
<div style="left:334.4px;top:1317.6px;width:24px;height:20.8px;background:#f6f6f6;border-radius:1.2px"></div>
<div style="left:341.2px;top:1317.6px;width:2.4px;height:12.8px;background:#3a3c42;"></div>
<div style="left:349.2px;top:1317.6px;width:2.4px;height:12.8px;background:#3a3c42;"></div>
<div style="left:360px;top:1320.48px;font-size:17.2px;line-height:20.64px;color:#dcdce0;white-space:nowrap;-webkit-text-stroke:0.4px;width:34px;text-align:right;">31</div>
<div style="left:24px;top:1359.4px;width:8px;height:8px;background:#666970;border-radius:50%"></div>
<div style="left:44.6px;top:1358.4px;width:10px;height:10px;background:#ffffff;border-radius:50%"></div>
<div style="left:68px;top:1359.4px;width:8px;height:8px;background:#666970;border-radius:50%"></div>
<div style="left:128px;top:1354.56px;font-size:17.4px;line-height:20.88px;color:#f0f0f2;white-space:nowrap;-webkit-text-stroke:0.4px;">Padshop 2</div>
<div style="left:334.4px;top:1351.4px;width:24px;height:20.8px;background:#f6f6f6;border-radius:1.2px"></div>
<div style="left:341.2px;top:1351.4px;width:2.4px;height:12.8px;background:#3a3c42;"></div>
<div style="left:349.2px;top:1351.4px;width:2.4px;height:12.8px;background:#3a3c42;"></div>
<div style="left:360px;top:1354.28px;font-size:17.2px;line-height:20.64px;color:#dcdce0;white-space:nowrap;-webkit-text-stroke:0.4px;width:34px;text-align:right;">32</div>
<div style="left:24px;top:1393.16px;width:8px;height:8px;background:#666970;border-radius:50%"></div>
<div style="left:44.6px;top:1392.16px;width:10px;height:10px;background:#ffffff;border-radius:50%"></div>
<div style="left:68px;top:1393.16px;width:8px;height:8px;background:#666970;border-radius:50%"></div>
<div style="left:128px;top:1388.32px;font-size:17.4px;line-height:20.88px;color:#f0f0f2;white-space:nowrap;-webkit-text-stroke:0.4px;">Piano</div>
<div style="left:334.4px;top:1385.16px;width:24px;height:20.8px;background:#f6f6f6;border-radius:1.2px"></div>
<div style="left:341.2px;top:1385.16px;width:2.4px;height:12.8px;background:#3a3c42;"></div>
<div style="left:349.2px;top:1385.16px;width:2.4px;height:12.8px;background:#3a3c42;"></div>
<div style="left:360px;top:1388.04px;font-size:17.2px;line-height:20.64px;color:#dcdce0;white-space:nowrap;-webkit-text-stroke:0.4px;width:34px;text-align:right;">33</div>
<div style="left:100.8px;top:1421.72px;width:0;height:0;border-top:9.2px solid transparent;border-bottom:9.2px solid transparent;border-left:13.6px solid #f2f2f2"></div>
<div style="left:128px;top:1422.08px;font-size:17.4px;line-height:20.88px;color:#e6e6e8;white-space:nowrap;-webkit-text-stroke:0.4px;">Samples</div>
<div style="left:100.8px;top:1455.52px;width:0;height:0;border-top:9.2px solid transparent;border-bottom:9.2px solid transparent;border-left:13.6px solid #f2f2f2"></div>
<div style="left:128px;top:1455.88px;font-size:17.4px;line-height:20.88px;color:#e6e6e8;white-space:nowrap;-webkit-text-stroke:0.4px;">Drums</div>
<div style="left:100.8px;top:1489.28px;width:0;height:0;border-top:9.2px solid transparent;border-bottom:9.2px solid transparent;border-left:13.6px solid #f2f2f2"></div>
<div style="left:128px;top:1489.64px;font-size:17.4px;line-height:20.88px;color:#e6e6e8;white-space:nowrap;-webkit-text-stroke:0.4px;">Group Tracks</div>
<div style="left:92.8px;top:1525.84px;width:0;height:0;border-left:9.2px solid transparent;border-right:9.2px solid transparent;border-top:13.6px solid #f2f2f2"></div>
<div style="left:128px;top:1523.4px;font-size:17.4px;line-height:20.88px;color:#e6e6e8;white-space:nowrap;-webkit-text-stroke:0.4px;">FX Channels</div>
<div style="left:24px;top:1562.04px;width:8px;height:8px;background:#666970;border-radius:50%"></div>
<div style="left:44.6px;top:1561.04px;width:10px;height:10px;background:#ffffff;border-radius:50%"></div>
<div style="left:68px;top:1562.04px;width:8px;height:8px;background:#666970;border-radius:50%"></div>
<div style="left:128px;top:1557.2px;font-size:17.4px;line-height:20.88px;color:#f0f0f2;white-space:nowrap;-webkit-text-stroke:0.4px;">Reverb</div>
<div style="left:333.2px;top:1555px;font-size:18.4px;line-height:22.08px;color:#f4f4f4;white-space:nowrap;font-weight:bold;-webkit-text-stroke:0.48px;">FX</div>
<div style="left:360px;top:1556.92px;font-size:17.2px;line-height:20.64px;color:#dcdce0;white-space:nowrap;-webkit-text-stroke:0.4px;width:34px;text-align:right;">58</div>
<div style="left:24px;top:1595.8px;width:8px;height:8px;background:#666970;border-radius:50%"></div>
<div style="left:44.6px;top:1594.8px;width:10px;height:10px;background:#ffffff;border-radius:50%"></div>
<div style="left:68px;top:1595.8px;width:8px;height:8px;background:#666970;border-radius:50%"></div>
<div style="left:128px;top:1590.96px;font-size:17.4px;line-height:20.88px;color:#f0f0f2;white-space:nowrap;-webkit-text-stroke:0.4px;">MultiTap Delay</div>
<div style="left:333.2px;top:1588.76px;font-size:18.4px;line-height:22.08px;color:#f4f4f4;white-space:nowrap;font-weight:bold;-webkit-text-stroke:0.48px;">FX</div>
<div style="left:360px;top:1590.68px;font-size:17.2px;line-height:20.64px;color:#dcdce0;white-space:nowrap;-webkit-text-stroke:0.4px;width:34px;text-align:right;">59</div>
<div style="left:24px;top:1629.56px;width:8px;height:8px;background:#666970;border-radius:50%"></div>
<div style="left:44.6px;top:1628.56px;width:10px;height:10px;background:#ffffff;border-radius:50%"></div>
<div style="left:68px;top:1629.56px;width:8px;height:8px;background:#666970;border-radius:50%"></div>
<div style="left:128px;top:1624.72px;font-size:17.4px;line-height:20.88px;color:#f0f0f2;white-space:nowrap;-webkit-text-stroke:0.4px;">Saturation</div>
<div style="left:333.2px;top:1622.52px;font-size:18.4px;line-height:22.08px;color:#f4f4f4;white-space:nowrap;font-weight:bold;-webkit-text-stroke:0.48px;">FX</div>
<div style="left:360px;top:1624.44px;font-size:17.2px;line-height:20.64px;color:#dcdce0;white-space:nowrap;-webkit-text-stroke:0.4px;width:34px;text-align:right;">60</div>
<div style="left:92.8px;top:1660.92px;width:0;height:0;border-left:9.2px solid transparent;border-right:9.2px solid transparent;border-top:13.6px solid #f2f2f2"></div>
<div style="left:128px;top:1658.48px;font-size:17.4px;line-height:20.88px;color:#e6e6e8;white-space:nowrap;-webkit-text-stroke:0.4px;">Input/Output Channels</div>
<div style="left:14.4px;top:1684.92px;width:378.4px;height:32.4px;background:#c9cacc;"></div>
<div style="left:100.8px;top:1685.12px;width:2.8px;height:16px;background:#8e9096;"></div>
<div style="left:128px;top:1692.28px;font-size:17.4px;line-height:20.88px;color:#1a1a1c;white-space:nowrap;-webkit-text-stroke:0.4px;">Stereo Out</div>
<div style="left:25.2px;top:1698.32px;width:5.6px;height:5.6px;background:#a6a7aa;border-radius:50%"></div>
<div style="left:46.4px;top:1698.32px;width:5.6px;height:5.6px;background:#a6a7aa;border-radius:50%"></div>
<div style="left:67.6px;top:1696.72px;width:8.8px;height:8.8px;background:#111;border-radius:50%"></div>
<div style="left:332px;top:1700.32px;width:22px;height:6.4px;background:#1a1a1c;border-radius:6px 6px 0 0"></div>
<div style="left:340px;top:1694.72px;width:6.4px;height:6.4px;background:#1a1a1c;"></div>
<div style="left:321.6px;top:1685.12px;width:4.8px;height:32px;background:#8a8c90;"></div>
<div style="left:0px;top:1878.4px;width:408px;height:33.6px;background:#08080a;"></div>
<div style="left:124px;top:1876px;width:102px;height:36px;background:#2d2f35;border:3.2px solid #46484e;border-top:none;border-radius:0 0 8px 8px;box-sizing:border-box"></div>
<div style="left:32px;top:1886.4px;font-size:16px;line-height:19.2px;color:#e8e8e8;white-space:nowrap;font-weight:bold;-webkit-text-stroke:0.48px;">Channel</div>
<div style="left:150px;top:1886.4px;font-size:16px;line-height:19.2px;color:#f4f4f4;white-space:nowrap;font-weight:bold;-webkit-text-stroke:0.48px;">Zones</div>
<div style="left:411.2px;top:88.8px;width:2700.8px;height:169.6px;background:#2f3137;border:3.2px solid #46484e;border-radius:10px;box-sizing:border-box"></div>
<div style="left:411.2px;top:266px;width:2700.8px;height:101.6px;background:#2f3137;border:3.2px solid #46484e;border-radius:10px;box-sizing:border-box"></div>
<div style="left:411.2px;top:374.4px;width:2700.8px;height:908px;background:#1c1d20;border:3.2px solid #46484e;border-radius:8px;box-sizing:border-box"></div>
<div style="left:2017.2px;top:380px;width:97.2px;height:899.2px;background:#2b2d32;"></div>
<div style="left:415.2px;top:381.2px;width:2684.8px;height:24px;background:#8a969f;"></div>
<div style="left:2017.2px;top:405.2px;width:97.2px;height:7.6px;background:#0e0e10;"></div>
<div style="left:415.2px;top:412.8px;width:2684.8px;height:22.8px;background:#c6d4e3;"></div>
<div style="left:411.2px;top:1289.2px;width:2700.8px;height:618.4px;background:#1a1b1e;border:4px solid #8b9096;border-radius:12px;box-sizing:border-box"></div>
<div style="left:417.2px;top:1885.2px;width:660.8px;height:12px;background:#868b92;border-radius:4px"></div>
<div style="left:2017.2px;top:1294.4px;width:97.2px;height:588px;background:#2b2d32;"></div>
<div class="ch c0" style="left:416px"><i class="mbg"></i><i class="msp"></i><i class="mrt"></i><i class="g1" style="left:10.8px;top:136.8px;height:114.8px"></i><i class="g1" style="left:67.2px;top:126.8px;height:124.8px"></i><i class="r1"></i><i class="r2"></i><i class="r3"></i><i class="ic"></i><i class="it">INSERTS</i><i class="sc"></i><i class="stx">STRIP</i><i class="s1"></i><i class="s1t">Noise Gate</i><i class="s2c"></i><i class="s2ct">Comp</i><i class="s3"></i><i class="s3t">EQ</i><b style="top:549.6px"><i class="bh"></i><i class="bi"></i><i class="bn">4 HI</i><i class="bs">&#9585;</i><i class="k0"></i><i class="p0"></i><i class="l0">Gain 4</i><i class="k1"></i><i class="p1"></i><i class="l1">Q 4</i><i class="k2"></i><i class="p2"></i><i class="l2">Freq 4</i></b><b style="top:735.6px"><i class="bh"></i><i class="bi"></i><i class="bn">3 HMF</i><i class="bs">&#9585;</i><i class="k0"></i><i class="p0" style="transform:rotate(-8deg)"></i><i class="l0">Gain 3</i><i class="k1"></i><i class="p1"></i><i class="l1">Q 3</i><i class="k2"></i><i class="p2" style="transform:rotate(-25deg)"></i><i class="l2">Freq 3</i></b><b style="top:921.6px"><i class="bh"></i><i class="bi"></i><i class="bn">2 LMF</i><i class="bs">&#9585;</i><i class="k0"></i><i class="p0" style="transform:rotate(-3deg)"></i><i class="l0">Gain 2</i><i class="k1"></i><i class="p1"></i><i class="l1">Q 2</i><i class="k2"></i><i class="p2" style="transform:rotate(-50deg)"></i><i class="l2">Freq 2</i></b><b style="top:1107.6px"><i class="bh ba"></i><i class="bk"></i><i class="bk2"></i><i class="bn" style="color:#f0f6fa">1 LO</i><i class="bs">&#9585;</i><i class="k0"></i><i class="p0" style="transform:rotate(-65deg)"></i><i class="l0">Gain 1</i><i class="k1"></i><i class="p1"></i><i class="l1">Q 1</i><i class="k2"></i><i class="p2" style="transform:rotate(-80deg)"></i><i class="l2">Freq 1</i></b><i class="f1"></i><i class="f2"></i><i class="f3"></i><i class="f4"></i><i class="f5"></i><i class="b00"></i><i class="d00"></i><i class="b01"></i><i class="d01"></i><i class="b10"></i><i class="d10"></i><i class="b11"></i><i class="d11"></i><i class="b20" style="background:#6cc23a"></i><i class="d20"></i><i class="b21"></i><i class="d21"></i><i class="b30"></i><i class="d30"></i><i class="b31"></i><i class="d31"></i><i class="ft"></i><i class="m0"></i><i class="m1"></i><i class="m2"></i><i class="m3"></i><i class="m4"></i><i class="m5"></i><i class="m6"></i><i class="m7"></i><i class="m8"></i><i class="fm"></i><i class="g2" style="left:77.6px;top:1492.8px;height:205.2px"></i><i class="g2" style="left:98.4px;top:1472px;height:226px"></i><i class="capy" style="top:1450.4px"></i><i class="fv"></i><i class="fvt">2.02</i><i class="fvu">-7.2</i><i class="fn"></i><i class="fi"></i><i class="fnum">1</i><i class="nm">Violins I</i><i class="fs"></i></div>
<div class="ch c0" style="left:539.08px"><i class="mbg"></i><i class="msp"></i><i class="mrt"></i><i class="g1" style="left:10.8px;top:179.2px;height:72.4px"></i><i class="g1" style="left:67.2px;top:171.2px;height:80.4px"></i><i class="r1"></i><i class="r2"></i><i class="r3"></i><i class="ic"></i><i class="it">INSERTS</i><i class="sc"></i><i class="stx">STRIP</i><i class="s1"></i><i class="s1t">Noise Gate</i><i class="s2c"></i><i class="s2ct">Comp</i><i class="s3"></i><i class="s3t">EQ</i><b style="top:549.6px"><i class="bh"></i><i class="bi"></i><i class="bn">4 HI</i><i class="bs">&#9585;</i><i class="k0"></i><i class="p0"></i><i class="l0">Gain 4</i><i class="k1"></i><i class="p1"></i><i class="l1">Q 4</i><i class="k2"></i><i class="p2"></i><i class="l2">Freq 4</i></b><b style="top:735.6px"><i class="bh"></i><i class="bi"></i><i class="bn">3 HMF</i><i class="bs">&#9585;</i><i class="k0"></i><i class="p0" style="transform:rotate(-8deg)"></i><i class="l0">Gain 3</i><i class="k1"></i><i class="p1"></i><i class="l1">Q 3</i><i class="k2"></i><i class="p2" style="transform:rotate(-25deg)"></i><i class="l2">Freq 3</i></b><b style="top:921.6px"><i class="bh"></i><i class="bi"></i><i class="bn">2 LMF</i><i class="bs">&#9585;</i><i class="k0"></i><i class="p0" style="transform:rotate(-3deg)"></i><i class="l0">Gain 2</i><i class="k1"></i><i class="p1"></i><i class="l1">Q 2</i><i class="k2"></i><i class="p2" style="transform:rotate(-50deg)"></i><i class="l2">Freq 2</i></b><b style="top:1107.6px"><i class="bh ba"></i><i class="bk"></i><i class="bk2"></i><i class="bn" style="color:#f0f6fa">1 LO</i><i class="bs">&#9585;</i><i class="k0"></i><i class="p0" style="transform:rotate(-65deg)"></i><i class="l0">Gain 1</i><i class="k1"></i><i class="p1"></i><i class="l1">Q 1</i><i class="k2"></i><i class="p2" style="transform:rotate(-80deg)"></i><i class="l2">Freq 1</i></b><i class="f1"></i><i class="f2"></i><i class="f3"></i><i class="f4"></i><i class="f5"></i><i class="b00"></i><i class="d00"></i><i class="b01"></i><i class="d01"></i><i class="b10"></i><i class="d10"></i><i class="b11"></i><i class="d11"></i><i class="b20"></i><i class="d20"></i><i class="b21"></i><i class="d21"></i><i class="b30"></i><i class="d30"></i><i class="b31"></i><i class="d31"></i><i class="ft"></i><i class="m0"></i><i class="m1"></i><i class="m2"></i><i class="m3"></i><i class="m4"></i><i class="m5"></i><i class="m6"></i><i class="m7"></i><i class="m8"></i><i class="fm"></i><i class="g2" style="left:77.6px;top:1566px;height:132px"></i><i class="g2" style="left:98.4px;top:1552px;height:146px"></i><i class="capy" style="top:1540px"></i><i class="fv"></i><i class="fvt">-8.52</i><i class="fvu">-7.2</i><i class="fn"></i><i class="fi"></i><i class="fnum">2</i><i class="nm">Violines II</i><i class="fs"></i></div>
<div class="ch c0" style="left:662.16px"><i class="mbg"></i><i class="msp"></i><i class="mrt"></i><i class="g1" style="left:10.8px;top:149.2px;height:102.4px"></i><i class="g1" style="left:67.2px;top:139.2px;height:112.4px"></i><i class="r1"></i><i class="r2"></i><i class="r3"></i><i class="ic"></i><i class="it">INSERTS</i><i class="sc"></i><i class="stx">STRIP</i><i class="s1"></i><i class="s1t">Noise Gate</i><i class="s2"></i><i class="s2t">Standard Com...</i><i class="s3"></i><i class="s3t">EQ</i><b style="top:549.6px"><i class="bh"></i><i class="bi"></i><i class="bn">4 HI</i><i class="bs">&#9585;</i><i class="k0"></i><i class="p0"></i><i class="l0">Gain 4</i><i class="k1"></i><i class="p1"></i><i class="l1">Q 4</i><i class="k2"></i><i class="p2"></i><i class="l2">Freq 4</i></b><b style="top:735.6px"><i class="bh"></i><i class="bi"></i><i class="bn">3 HMF</i><i class="bs">&#9585;</i><i class="k0"></i><i class="p0" style="transform:rotate(-8deg)"></i><i class="l0">Gain 3</i><i class="k1"></i><i class="p1"></i><i class="l1">Q 3</i><i class="k2"></i><i class="p2" style="transform:rotate(-25deg)"></i><i class="l2">Freq 3</i></b><b style="top:921.6px"><i class="bh"></i><i class="bi"></i><i class="bn">2 LMF</i><i class="bs">&#9585;</i><i class="k0"></i><i class="p0" style="transform:rotate(-3deg)"></i><i class="l0">Gain 2</i><i class="k1"></i><i class="p1"></i><i class="l1">Q 2</i><i class="k2"></i><i class="p2" style="transform:rotate(-50deg)"></i><i class="l2">Freq 2</i></b><b style="top:1107.6px"><i class="bh ba"></i><i class="bk"></i><i class="bk2"></i><i class="bn" style="color:#f0f6fa">1 LO</i><i class="bs">&#9585;</i><i class="k0"></i><i class="p0" style="transform:rotate(-65deg)"></i><i class="l0">Gain 1</i><i class="k1"></i><i class="p1"></i><i class="l1">Q 1</i><i class="k2"></i><i class="p2" style="transform:rotate(-80deg)"></i><i class="l2">Freq 1</i></b><i class="f1"></i><i class="f2"></i><i class="f3"></i><i class="f4"></i><i class="f5"></i><i class="b00"></i><i class="d00"></i><i class="b01"></i><i class="d01"></i><i class="b10"></i><i class="d10"></i><i class="b11"></i><i class="d11"></i><i class="b20"></i><i class="d20"></i><i class="b21"></i><i class="d21"></i><i class="b30"></i><i class="d30"></i><i class="b31"></i><i class="d31"></i><i class="ft"></i><i class="m0"></i><i class="m1"></i><i class="m2"></i><i class="m3"></i><i class="m4"></i><i class="m5"></i><i class="m6"></i><i class="m7"></i><i class="m8"></i><i class="fm"></i><i class="g2" style="left:77.6px;top:1510.4px;height:187.6px"></i><i class="g2" style="left:98.4px;top:1498px;height:200px"></i><i class="capy" style="top:1496.4px"></i><i class="fv"></i><i class="fvt">-2.76</i><i class="fvu">-7.2</i><i class="fn"></i><i class="fi"></i><i class="fnum">3</i><i class="na">Violines</i><i class="nb">Short</i><i class="fs"></i></div>
<div class="ch c0" style="left:785.24px"><i class="mbg"></i><i class="msp"></i><i class="mrt"></i><i class="g1" style="left:10.8px;top:141.2px;height:110.4px"></i><i class="g1" style="left:67.2px;top:136.8px;height:114.8px"></i><i class="r1"></i><i class="r2"></i><i class="r3"></i><i class="ic"></i><i class="it">INSERTS</i><i class="sc"></i><i class="stx">STRIP</i><i class="s1"></i><i class="s1t">Noise Gate</i><i class="s2"></i><i class="s2t">Standard Com...</i><i class="s3"></i><i class="s3t">EQ</i><b style="top:549.6px"><i class="bh"></i><i class="bi"></i><i class="bn">4 HI</i><i class="bs">&#9585;</i><i class="k0"></i><i class="p0"></i><i class="l0">Gain 4</i><i class="k1"></i><i class="p1"></i><i class="l1">Q 4</i><i class="k2"></i><i class="p2"></i><i class="l2">Freq 4</i></b><b style="top:735.6px"><i class="bh"></i><i class="bi"></i><i class="bn">3 HMF</i><i class="bs">&#9585;</i><i class="k0"></i><i class="p0" style="transform:rotate(-8deg)"></i><i class="l0">Gain 3</i><i class="k1"></i><i class="p1"></i><i class="l1">Q 3</i><i class="k2"></i><i class="p2" style="transform:rotate(-25deg)"></i><i class="l2">Freq 3</i></b><b style="top:921.6px"><i class="bh"></i><i class="bi"></i><i class="bn">2 LMF</i><i class="bs">&#9585;</i><i class="k0"></i><i class="p0" style="transform:rotate(-3deg)"></i><i class="l0">Gain 2</i><i class="k1"></i><i class="p1"></i><i class="l1">Q 2</i><i class="k2"></i><i class="p2" style="transform:rotate(-50deg)"></i><i class="l2">Freq 2</i></b><b style="top:1107.6px"><i class="bh ba"></i><i class="bk"></i><i class="bk2"></i><i class="bn" style="color:#f0f6fa">1 LO</i><i class="bs">&#9585;</i><i class="k0"></i><i class="p0" style="transform:rotate(-65deg)"></i><i class="l0">Gain 1</i><i class="k1"></i><i class="p1"></i><i class="l1">Q 1</i><i class="k2"></i><i class="p2" style="transform:rotate(-80deg)"></i><i class="l2">Freq 1</i></b><i class="f1"></i><i class="f2"></i><i class="f3"></i><i class="f4"></i><i class="f5"></i><i class="b00"></i><i class="d00"></i><i class="b01"></i><i class="d01"></i><i class="b10"></i><i class="d10"></i><i class="b11"></i><i class="d11"></i><i class="b20"></i><i class="d20"></i><i class="b21"></i><i class="d21"></i><i class="b30"></i><i class="d30"></i><i class="b31"></i><i class="d31"></i><i class="ft"></i><i class="m0"></i><i class="m1"></i><i class="m2"></i><i class="m3"></i><i class="m4"></i><i class="m5"></i><i class="m6"></i><i class="m7"></i><i class="m8"></i><i class="fm"></i><i class="g2" style="left:77.6px;top:1498px;height:200px"></i><i class="g2" style="left:98.4px;top:1492.8px;height:205.2px"></i><i class="capy" style="top:1469.2px"></i><i class="fv"></i><i class="fvt">0.00</i><i class="fvu">-7.2</i><i class="fn"></i><i class="fi"></i><i class="fnum">4</i><i class="nm">Violines Long</i><i class="fs"></i></div>
<div class="ch c0" style="left:908.32px"><i class="mbg"></i><i class="msp"></i><i class="mrt"></i><i class="g1" style="left:10.8px;top:228px;height:23.6px"></i><i class="g1" style="left:67.2px;top:231.6px;height:20px"></i><i class="r1"></i><i class="r2"></i><i class="r3"></i><i class="ic"></i><i class="it">INSERTS</i><i class="sc"></i><i class="stx">STRIP</i><i class="s1"></i><i class="s1t">Noise Gate</i><i class="s2"></i><i class="s2t">Standard Com...</i><i class="s3"></i><i class="s3t">EQ</i><b style="top:549.6px"><i class="bh"></i><i class="bi"></i><i class="bn">4 HI</i><i class="bs">&#9585;</i><i class="k0"></i><i class="p0"></i><i class="l0">Gain 4</i><i class="k1"></i><i class="p1"></i><i class="l1">Q 4</i><i class="k2"></i><i class="p2"></i><i class="l2">Freq 4</i></b><b style="top:735.6px"><i class="bh"></i><i class="bi"></i><i class="bn">3 HMF</i><i class="bs">&#9585;</i><i class="k0"></i><i class="p0" style="transform:rotate(-8deg)"></i><i class="l0">Gain 3</i><i class="k1"></i><i class="p1"></i><i class="l1">Q 3</i><i class="k2"></i><i class="p2" style="transform:rotate(-25deg)"></i><i class="l2">Freq 3</i></b><b style="top:921.6px"><i class="bh"></i><i class="bi"></i><i class="bn">2 LMF</i><i class="bs">&#9585;</i><i class="k0"></i><i class="p0" style="transform:rotate(-3deg)"></i><i class="l0">Gain 2</i><i class="k1"></i><i class="p1"></i><i class="l1">Q 2</i><i class="k2"></i><i class="p2" style="transform:rotate(-50deg)"></i><i class="l2">Freq 2</i></b><b style="top:1107.6px"><i class="bh ba"></i><i class="bk"></i><i class="bk2"></i><i class="bn" style="color:#f0f6fa">1 LO</i><i class="bs">&#9585;</i><i class="k0"></i><i class="p0" style="transform:rotate(-65deg)"></i><i class="l0">Gain 1</i><i class="k1"></i><i class="p1"></i><i class="l1">Q 1</i><i class="k2"></i><i class="p2" style="transform:rotate(-80deg)"></i><i class="l2">Freq 1</i></b><i class="f1"></i><i class="f2"></i><i class="f3"></i><i class="f4"></i><i class="f5"></i><i class="b00"></i><i class="d00"></i><i class="b01"></i><i class="d01"></i><i class="b10"></i><i class="d10"></i><i class="b11"></i><i class="d11"></i><i class="b20"></i><i class="d20"></i><i class="b21"></i><i class="d21"></i><i class="b30"></i><i class="d30"></i><i class="b31"></i><i class="d31"></i><i class="ft"></i><i class="m0"></i><i class="m1"></i><i class="m2"></i><i class="m3"></i><i class="m4"></i><i class="m5"></i><i class="m6"></i><i class="m7"></i><i class="m8"></i><i class="fm"></i><i class="g2" style="left:77.6px;top:1656px;height:42px"></i><i class="g2" style="left:98.4px;top:1663.6px;height:34.4px"></i><i class="capy" style="top:1535.6px"></i><i class="fv"></i><i class="fvt">-7.80</i><i class="fvu">-7.2</i><i class="fn"></i><i class="fi"></i><i class="fnum">5</i><i class="nm">Viola Short</i><i class="fs"></i></div>
<div class="ch c0" style="left:1031.4px"><i class="mbg"></i><i class="msp"></i><i class="mrt"></i><i class="g1" style="left:10.8px;top:215.2px;height:36.4px"></i><i class="g1" style="left:67.2px;top:215.2px;height:36.4px"></i><i class="r1"></i><i class="r2"></i><i class="r3"></i><i class="ic"></i><i class="it">INSERTS</i><i class="sc"></i><i class="stx">STRIP</i><i class="s1"></i><i class="s1t">Noise Gate</i><i class="s2"></i><i class="s2t">Standard Com...</i><i class="s3"></i><i class="s3t">EQ</i><b style="top:549.6px"><i class="bh ba"></i><i class="bk"></i><i class="bk2"></i><i class="bn" style="color:#f0f6fa">4 HI</i><i class="bs">&#9585;</i><i class="k0"></i><i class="p0"></i><i class="l0">Gain 4</i><i class="k1"></i><i class="p1"></i><i class="l1">Q 4</i><i class="k2"></i><i class="p2"></i><i class="l2">Freq 4</i></b><b style="top:735.6px"><i class="bh"></i><i class="bi"></i><i class="bn">3 HMF</i><i class="bs">&#9585;</i><i class="k0"></i><i class="p0" style="transform:rotate(-8deg)"></i><i class="l0">Gain 3</i><i class="k1"></i><i class="p1"></i><i class="l1">Q 3</i><i class="k2"></i><i class="p2" style="transform:rotate(-25deg)"></i><i class="l2">Freq 3</i></b><b style="top:921.6px"><i class="bh ba"></i><i class="bk"></i><i class="bk2"></i><i class="bn" style="color:#f0f6fa">2 LMF</i><i class="bs">&#9585;</i><i class="k0"></i><i class="p0" style="transform:rotate(-3deg)"></i><i class="l0">Gain 2</i><i class="k1"></i><i class="p1"></i><i class="l1">Q 2</i><i class="k2"></i><i class="p2" style="transform:rotate(-50deg)"></i><i class="l2">Freq 2</i></b><b style="top:1107.6px"><i class="bh"></i><i class="bi"></i><i class="bn">1 LO</i><i class="bs">&#9585;</i><i class="k0"></i><i class="p0" style="transform:rotate(-65deg)"></i><i class="l0">Gain 1</i><i class="k1"></i><i class="p1"></i><i class="l1">Q 1</i><i class="k2"></i><i class="p2" style="transform:rotate(-80deg)"></i><i class="l2">Freq 1</i></b><i class="f1"></i><i class="f2"></i><i class="f3"></i><i class="f4"></i><i class="f5"></i><i class="b00"></i><i class="d00"></i><i class="b01"></i><i class="d01"></i><i class="b10"></i><i class="d10"></i><i class="b11"></i><i class="d11"></i><i class="b20" style="background:#6cc23a"></i><i class="d20"></i><i class="b21"></i><i class="d21"></i><i class="b30"></i><i class="d30"></i><i class="b31"></i><i class="d31"></i><i class="ft"></i><i class="m0"></i><i class="m1"></i><i class="m2"></i><i class="m3"></i><i class="m4"></i><i class="m5"></i><i class="m6"></i><i class="m7"></i><i class="m8"></i><i class="fm"></i><i class="g2" style="left:77.6px;top:1632px;height:66px"></i><i class="g2" style="left:98.4px;top:1632px;height:66px"></i><i class="capy" style="top:1475.2px"></i><i class="fv"></i><i class="fvt">-0.81</i><i class="fvu">-7.2</i><i class="fn"></i><i class="fi"></i><i class="fnum">6</i><i class="nm">Viola Long</i><i class="fs"></i></div>
<div class="ch c0" style="left:1154.48px"><i class="mbg"></i><i class="msp"></i><i class="mrt"></i><i class="g1" style="left:10.8px;top:156.4px;height:95.2px"></i><i class="g1" style="left:67.2px;top:156px;height:95.6px"></i><i class="r1"></i><i class="r2"></i><i class="r3"></i><i class="ic"></i><i class="it">INSERTS</i><i class="sc"></i><i class="stx">STRIP</i><i class="s1"></i><i class="s1t">Noise Gate</i><i class="s2"></i><i class="s2t">Standard Com...</i><i class="s3"></i><i class="s3t">EQ</i><b style="top:549.6px"><i class="bh"></i><i class="bi"></i><i class="bn">4 HI</i><i class="bs">&#9585;</i><i class="k0"></i><i class="p0"></i><i class="l0">Gain 4</i><i class="k1"></i><i class="p1"></i><i class="l1">Q 4</i><i class="k2"></i><i class="p2"></i><i class="l2">Freq 4</i></b><b style="top:735.6px"><i class="bh"></i><i class="bi"></i><i class="bn">3 HMF</i><i class="bs">&#9585;</i><i class="k0"></i><i class="p0" style="transform:rotate(-8deg)"></i><i class="l0">Gain 3</i><i class="k1"></i><i class="p1"></i><i class="l1">Q 3</i><i class="k2"></i><i class="p2" style="transform:rotate(-25deg)"></i><i class="l2">Freq 3</i></b><b style="top:921.6px"><i class="bh"></i><i class="bi"></i><i class="bn">2 LMF</i><i class="bs">&#9585;</i><i class="k0"></i><i class="p0" style="transform:rotate(-3deg)"></i><i class="l0">Gain 2</i><i class="k1"></i><i class="p1"></i><i class="l1">Q 2</i><i class="k2"></i><i class="p2" style="transform:rotate(-50deg)"></i><i class="l2">Freq 2</i></b><b style="top:1107.6px"><i class="bh"></i><i class="bi"></i><i class="bn">1 LO</i><i class="bs">&#9585;</i><i class="k0"></i><i class="p0" style="transform:rotate(-65deg)"></i><i class="l0">Gain 1</i><i class="k1"></i><i class="p1"></i><i class="l1">Q 1</i><i class="k2"></i><i class="p2" style="transform:rotate(-80deg)"></i><i class="l2">Freq 1</i></b><i class="f1"></i><i class="f2"></i><i class="f3"></i><i class="f4"></i><i class="f5"></i><i class="b00"></i><i class="d00"></i><i class="b01"></i><i class="d01"></i><i class="b10"></i><i class="d10"></i><i class="b11"></i><i class="d11"></i><i class="b20"></i><i class="d20"></i><i class="b21"></i><i class="d21"></i><i class="b30"></i><i class="d30"></i><i class="b31"></i><i class="d31"></i><i class="ft"></i><i class="m0"></i><i class="m1"></i><i class="m2"></i><i class="m3"></i><i class="m4"></i><i class="m5"></i><i class="m6"></i><i class="m7"></i><i class="m8"></i><i class="fm"></i><i class="g2" style="left:77.6px;top:1526px;height:172px"></i><i class="g2" style="left:98.4px;top:1526px;height:172px"></i><i class="capy" style="top:1529.6px"></i><i class="fv"></i><i class="fvt">-7.26</i><i class="fvu">-7.2</i><i class="fn"></i><i class="fi"></i><i class="fnum">7</i><i class="nm">Celli Short</i><i class="fs"></i></div>
<div class="ch c0" style="left:1277.56px"><i class="mbg"></i><i class="msp"></i><i class="mrt"></i><i class="g1" style="left:10.8px;top:130px;height:121.6px"></i><i class="g1" style="left:67.2px;top:137.6px;height:114px"></i><i class="r1"></i><i class="r2"></i><i class="r3"></i><i class="ic"></i><i class="it">INSERTS</i><i class="sc"></i><i class="stx">STRIP</i><i class="s1"></i><i class="s1t">Noise Gate</i><i class="s2"></i><i class="s2t">Standard Com...</i><i class="s3"></i><i class="s3t">EQ</i><b style="top:549.6px"><i class="bh"></i><i class="bi"></i><i class="bn">4 HI</i><i class="bs">&#9585;</i><i class="k0"></i><i class="p0"></i><i class="l0">Gain 4</i><i class="k1"></i><i class="p1"></i><i class="l1">Q 4</i><i class="k2"></i><i class="p2"></i><i class="l2">Freq 4</i></b><b style="top:735.6px"><i class="bh"></i><i class="bi"></i><i class="bn">3 HMF</i><i class="bs">&#9585;</i><i class="k0"></i><i class="p0" style="transform:rotate(-8deg)"></i><i class="l0">Gain 3</i><i class="k1"></i><i class="p1"></i><i class="l1">Q 3</i><i class="k2"></i><i class="p2" style="transform:rotate(-25deg)"></i><i class="l2">Freq 3</i></b><b style="top:921.6px"><i class="bh"></i><i class="bi"></i><i class="bn">2 LMF</i><i class="bs">&#9585;</i><i class="k0"></i><i class="p0" style="transform:rotate(-3deg)"></i><i class="l0">Gain 2</i><i class="k1"></i><i class="p1"></i><i class="l1">Q 2</i><i class="k2"></i><i class="p2" style="transform:rotate(-50deg)"></i><i class="l2">Freq 2</i></b><b style="top:1107.6px"><i class="bh"></i><i class="bi"></i><i class="bn">1 LO</i><i class="bs">&#9585;</i><i class="k0"></i><i class="p0" style="transform:rotate(-65deg)"></i><i class="l0">Gain 1</i><i class="k1"></i><i class="p1"></i><i class="l1">Q 1</i><i class="k2"></i><i class="p2" style="transform:rotate(-80deg)"></i><i class="l2">Freq 1</i></b><i class="f1"></i><i class="f2"></i><i class="f3"></i><i class="f4"></i><i class="f5"></i><i class="b00"></i><i class="d00"></i><i class="b01"></i><i class="d01"></i><i class="b10"></i><i class="d10"></i><i class="b11"></i><i class="d11"></i><i class="b20"></i><i class="d20"></i><i class="b21"></i><i class="d21"></i><i class="b30"></i><i class="d30"></i><i class="b31"></i><i class="d31"></i><i class="ft"></i><i class="m0"></i><i class="m1"></i><i class="m2"></i><i class="m3"></i><i class="m4"></i><i class="m5"></i><i class="m6"></i><i class="m7"></i><i class="m8"></i><i class="fm"></i><i class="g2" style="left:77.6px;top:1477.6px;height:220.4px"></i><i class="g2" style="left:98.4px;top:1490.4px;height:207.6px"></i><i class="capy" style="top:1468px"></i><i class="fv"></i><i class="fvt">0.00</i><i class="fvu">-7.2</i><i class="fn"></i><i class="fi"></i><i class="fnum">8</i><i class="nm">Celli Long</i><i class="fs"></i></div>
<div class="ch c0" style="left:1400.64px"><i class="mbg"></i><i class="msp"></i><i class="mrt"></i><i class="g1" style="left:10.8px;top:160px;height:91.6px"></i><i class="g1" style="left:67.2px;top:160px;height:91.6px"></i><i class="r1"></i><i class="r2"></i><i class="r3"></i><i class="ic"></i><i class="it">INSERTS</i><i class="sc"></i><i class="stx">STRIP</i><i class="s1"></i><i class="s1t">Noise Gate</i><i class="s2"></i><i class="s2t">Standard Com...</i><i class="s3"></i><i class="s3t">EQ</i><b style="top:549.6px"><i class="bh"></i><i class="bi"></i><i class="bn">4 HI</i><i class="bs">&#9585;</i><i class="k0"></i><i class="p0"></i><i class="l0">Gain 4</i><i class="k1"></i><i class="p1"></i><i class="l1">Q 4</i><i class="k2"></i><i class="p2"></i><i class="l2">Freq 4</i></b><b style="top:735.6px"><i class="bh"></i><i class="bi"></i><i class="bn">3 HMF</i><i class="bs">&#9585;</i><i class="k0"></i><i class="p0" style="transform:rotate(-8deg)"></i><i class="l0">Gain 3</i><i class="k1"></i><i class="p1"></i><i class="l1">Q 3</i><i class="k2"></i><i class="p2" style="transform:rotate(-25deg)"></i><i class="l2">Freq 3</i></b><b style="top:921.6px"><i class="bh"></i><i class="bi"></i><i class="bn">2 LMF</i><i class="bs">&#9585;</i><i class="k0"></i><i class="p0" style="transform:rotate(-3deg)"></i><i class="l0">Gain 2</i><i class="k1"></i><i class="p1"></i><i class="l1">Q 2</i><i class="k2"></i><i class="p2" style="transform:rotate(-50deg)"></i><i class="l2">Freq 2</i></b><b style="top:1107.6px"><i class="bh"></i><i class="bi"></i><i class="bn">1 LO</i><i class="bs">&#9585;</i><i class="k0"></i><i class="p0" style="transform:rotate(-65deg)"></i><i class="l0">Gain 1</i><i class="k1"></i><i class="p1"></i><i class="l1">Q 1</i><i class="k2"></i><i class="p2" style="transform:rotate(-80deg)"></i><i class="l2">Freq 1</i></b><i class="f1"></i><i class="f2"></i><i class="f3"></i><i class="f4"></i><i class="f5"></i><i class="b00"></i><i class="d00"></i><i class="b01"></i><i class="d01"></i><i class="b10"></i><i class="d10"></i><i class="b11"></i><i class="d11"></i><i class="b20"></i><i class="d20"></i><i class="b21"></i><i class="d21"></i><i class="b30"></i><i class="d30"></i><i class="b31"></i><i class="d31"></i><i class="ft"></i><i class="m0"></i><i class="m1"></i><i class="m2"></i><i class="m3"></i><i class="m4"></i><i class="m5"></i><i class="m6"></i><i class="m7"></i><i class="m8"></i><i class="fm"></i><i class="g2" style="left:77.6px;top:1532px;height:166px"></i><i class="g2" style="left:98.4px;top:1532px;height:166px"></i><i class="capy" style="top:1524px"></i><i class="fv"></i><i class="fvt">-6.40</i><i class="fvu">-7.2</i><i class="fn"></i><i class="fi"></i><i class="fnum">9</i><i class="nm">Basses Short</i><i class="fs"></i></div>
<div class="ch c0" style="left:1523.72px"><i class="mbg"></i><i class="msp"></i><i class="mrt"></i><i class="g1" style="left:10.8px;top:140px;height:111.6px"></i><i class="g1" style="left:67.2px;top:140px;height:111.6px"></i><i class="r1"></i><i class="r2"></i><i class="r3"></i><i class="ic"></i><i class="it">INSERTS</i><i class="sc"></i><i class="stx">STRIP</i><i class="s1"></i><i class="s1t">Noise Gate</i><i class="s2"></i><i class="s2t">Standard Com...</i><i class="s3"></i><i class="s3t">EQ</i><b style="top:549.6px"><i class="bh"></i><i class="bi"></i><i class="bn">4 HI</i><i class="bs">&#9585;</i><i class="k0"></i><i class="p0"></i><i class="l0">Gain 4</i><i class="k1"></i><i class="p1"></i><i class="l1">Q 4</i><i class="k2"></i><i class="p2"></i><i class="l2">Freq 4</i></b><b style="top:735.6px"><i class="bh ba"></i><i class="bk"></i><i class="bk2"></i><i class="bn" style="color:#f0f6fa">3 HMF</i><i class="bs">&#9585;</i><i class="k0"></i><i class="p0" style="transform:rotate(-8deg)"></i><i class="l0">Gain 3</i><i class="k1"></i><i class="p1"></i><i class="l1">Q 3</i><i class="k2"></i><i class="p2" style="transform:rotate(-25deg)"></i><i class="l2">Freq 3</i></b><b style="top:921.6px"><i class="bh ba"></i><i class="bk"></i><i class="bk2"></i><i class="bn" style="color:#f0f6fa">2 LMF</i><i class="bs">&#9585;</i><i class="k0"></i><i class="p0" style="transform:rotate(-3deg)"></i><i class="l0">Gain 2</i><i class="k1"></i><i class="p1"></i><i class="l1">Q 2</i><i class="k2"></i><i class="p2" style="transform:rotate(-50deg)"></i><i class="l2">Freq 2</i></b><b style="top:1107.6px"><i class="bh ba"></i><i class="bk"></i><i class="bk2"></i><i class="bn" style="color:#f0f6fa">1 LO</i><i class="bs">&#9585;</i><i class="k0"></i><i class="p0" style="transform:rotate(-65deg)"></i><i class="l0">Gain 1</i><i class="k1"></i><i class="p1"></i><i class="l1">Q 1</i><i class="k2"></i><i class="p2" style="transform:rotate(-80deg)"></i><i class="l2">Freq 1</i></b><i class="f1"></i><i class="f2"></i><i class="f3"></i><i class="f4"></i><i class="f5"></i><i class="b00"></i><i class="d00"></i><i class="b01"></i><i class="d01"></i><i class="b10"></i><i class="d10"></i><i class="b11"></i><i class="d11"></i><i class="b20"></i><i class="d20"></i><i class="b21"></i><i class="d21"></i><i class="b30"></i><i class="d30"></i><i class="b31"></i><i class="d31"></i><i class="ft"></i><i class="m0"></i><i class="m1"></i><i class="m2"></i><i class="m3"></i><i class="m4"></i><i class="m5"></i><i class="m6"></i><i class="m7"></i><i class="m8"></i><i class="fm"></i><i class="g2" style="left:77.6px;top:1495.6px;height:202.4px"></i><i class="g2" style="left:98.4px;top:1495.6px;height:202.4px"></i><i class="capy" style="top:1464px"></i><i class="fv"></i><i class="fvt">0.32</i><i class="fvu">-7.2</i><i class="fn"></i><i class="fi"></i><i class="fnum">10</i><i class="nm">Basses Long</i><i class="fs"></i></div>
<div class="ch c1" style="left:1646.8px"><i class="mbg"></i><i class="msp"></i><i class="mrt"></i><i class="g1" style="left:10.8px;top:138.4px;height:113.2px"></i><i class="g1" style="left:67.2px;top:138.4px;height:113.2px"></i><i class="r1"></i><i class="r2"></i><i class="r3"></i><i class="ic"></i><i class="it">INSERTS</i><i class="sc"></i><i class="stx">STRIP</i><i class="s1"></i><i class="s1t">Noise Gate</i><i class="s2"></i><i class="s2t">Standard Com...</i><i class="s3"></i><i class="s3t">EQ</i><b style="top:549.6px"><i class="bh"></i><i class="bi"></i><i class="bn">4 HI</i><i class="bs">&#9585;</i><i class="k0"></i><i class="p0"></i><i class="l0">Gain 4</i><i class="k1"></i><i class="p1"></i><i class="l1">Q 4</i><i class="k2"></i><i class="p2"></i><i class="l2">Freq 4</i></b><b style="top:735.6px"><i class="bh"></i><i class="bi"></i><i class="bn">3 HMF</i><i class="bs">&#9585;</i><i class="k0"></i><i class="p0" style="transform:rotate(-8deg)"></i><i class="l0">Gain 3</i><i class="k1"></i><i class="p1"></i><i class="l1">Q 3</i><i class="k2"></i><i class="p2" style="transform:rotate(-25deg)"></i><i class="l2">Freq 3</i></b><b style="top:921.6px"><i class="bh"></i><i class="bi"></i><i class="bn">2 LMF</i><i class="bs">&#9585;</i><i class="k0"></i><i class="p0" style="transform:rotate(-3deg)"></i><i class="l0">Gain 2</i><i class="k1"></i><i class="p1"></i><i class="l1">Q 2</i><i class="k2"></i><i class="p2" style="transform:rotate(-50deg)"></i><i class="l2">Freq 2</i></b><b style="top:1107.6px"><i class="bh ba"></i><i class="bk"></i><i class="bk2"></i><i class="bn" style="color:#f0f6fa">1 LO</i><i class="bs">&#9585;</i><i class="k0"></i><i class="p0" style="transform:rotate(-65deg)"></i><i class="l0">Gain 1</i><i class="k1"></i><i class="p1"></i><i class="l1">Q 1</i><i class="k2"></i><i class="p2" style="transform:rotate(-80deg)"></i><i class="l2">Freq 1</i></b><i class="f1"></i><i class="f2"></i><i class="f3"></i><i class="f4"></i><i class="f5"></i><i class="b00"></i><i class="d00"></i><i class="b01"></i><i class="d01"></i><i class="b10"></i><i class="d10"></i><i class="b11"></i><i class="d11"></i><i class="b20"></i><i class="d20"></i><i class="b21"></i><i class="d21"></i><i class="b30"></i><i class="d30"></i><i class="b31"></i><i class="d31"></i><i class="ft"></i><i class="m0"></i><i class="m1"></i><i class="m2"></i><i class="m3"></i><i class="m4"></i><i class="m5"></i><i class="m6"></i><i class="m7"></i><i class="m8"></i><i class="fm"></i><i class="g2" style="left:77.6px;top:1492px;height:206px"></i><i class="g2" style="left:98.4px;top:1492px;height:206px"></i><i class="capy" style="top:1468px"></i><i class="fv"></i><i class="fvt">0.00</i><i class="fvu">-7.2</i><i class="fn"></i><i class="fi"></i><i class="fnum">11</i><i class="nm">Piccolo</i><i class="fs"></i></div>
<div class="ch c1" style="left:1769.88px"><i class="mbg"></i><i class="msp"></i><i class="mrt"></i><i class="g1" style="left:10.8px;top:156.4px;height:95.2px"></i><i class="g1" style="left:67.2px;top:156.4px;height:95.2px"></i><i class="r1"></i><i class="r2"></i><i class="r3"></i><i class="ic"></i><i class="it">INSERTS</i><i class="sc"></i><i class="stx">STRIP</i><i class="s1"></i><i class="s1t">Noise Gate</i><i class="s2"></i><i class="s2t">Standard Com...</i><i class="s3"></i><i class="s3t">EQ</i><b style="top:549.6px"><i class="bh"></i><i class="bi"></i><i class="bn">4 HI</i><i class="bs">&#9585;</i><i class="k0"></i><i class="p0"></i><i class="l0">Gain 4</i><i class="k1"></i><i class="p1"></i><i class="l1">Q 4</i><i class="k2"></i><i class="p2"></i><i class="l2">Freq 4</i></b><b style="top:735.6px"><i class="bh"></i><i class="bi"></i><i class="bn">3 HMF</i><i class="bs">&#9585;</i><i class="k0"></i><i class="p0" style="transform:rotate(-8deg)"></i><i class="l0">Gain 3</i><i class="k1"></i><i class="p1"></i><i class="l1">Q 3</i><i class="k2"></i><i class="p2" style="transform:rotate(-25deg)"></i><i class="l2">Freq 3</i></b><b style="top:921.6px"><i class="bh"></i><i class="bi"></i><i class="bn">2 LMF</i><i class="bs">&#9585;</i><i class="k0"></i><i class="p0" style="transform:rotate(-3deg)"></i><i class="l0">Gain 2</i><i class="k1"></i><i class="p1"></i><i class="l1">Q 2</i><i class="k2"></i><i class="p2" style="transform:rotate(-50deg)"></i><i class="l2">Freq 2</i></b><b style="top:1107.6px"><i class="bh ba"></i><i class="bk"></i><i class="bk2"></i><i class="bn" style="color:#f0f6fa">1 LO</i><i class="bs">&#9585;</i><i class="k0"></i><i class="p0" style="transform:rotate(-65deg)"></i><i class="l0">Gain 1</i><i class="k1"></i><i class="p1"></i><i class="l1">Q 1</i><i class="k2"></i><i class="p2" style="transform:rotate(-80deg)"></i><i class="l2">Freq 1</i></b><i class="f1"></i><i class="f2"></i><i class="f3"></i><i class="f4"></i><i class="f5"></i><i class="b00"></i><i class="d00"></i><i class="b01"></i><i class="d01"></i><i class="b10"></i><i class="d10"></i><i class="b11"></i><i class="d11"></i><i class="b20"></i><i class="d20"></i><i class="b21"></i><i class="d21"></i><i class="b30"></i><i class="d30"></i><i class="b31"></i><i class="d31"></i><i class="ft"></i><i class="m0"></i><i class="m1"></i><i class="m2"></i><i class="m3"></i><i class="m4"></i><i class="m5"></i><i class="m6"></i><i class="m7"></i><i class="m8"></i><i class="fm"></i><i class="g2" style="left:77.6px;top:1526px;height:172px"></i><i class="g2" style="left:98.4px;top:1526px;height:172px"></i><i class="capy" style="top:1528px"></i><i class="fv"></i><i class="fvt">-6.90</i><i class="fvu">-7.2</i><i class="fn"></i><i class="fi"></i><i class="fnum">12</i><i class="nm">Oboe I</i><i class="fs"></i></div>
<div class="ch c1" style="left:1892.96px"><i class="mbg"></i><i class="msp"></i><i class="mrt"></i><i class="g1" style="left:10.8px;top:138.4px;height:113.2px"></i><i class="g1" style="left:67.2px;top:138.4px;height:113.2px"></i><i class="r1"></i><i class="r2"></i><i class="r3"></i><i class="ic"></i><i class="it">INSERTS</i><i class="sc"></i><i class="stx">STRIP</i><i class="s1"></i><i class="s1t">Noise Gate</i><i class="s2"></i><i class="s2t">Standard Com...</i><i class="s3"></i><i class="s3t">EQ</i><b style="top:549.6px"><i class="bh"></i><i class="bi"></i><i class="bn">4 HI</i><i class="bs">&#9585;</i><i class="k0"></i><i class="p0"></i><i class="l0">Gain 4</i><i class="k1"></i><i class="p1"></i><i class="l1">Q 4</i><i class="k2"></i><i class="p2"></i><i class="l2">Freq 4</i></b><b style="top:735.6px"><i class="bh"></i><i class="bi"></i><i class="bn">3 HMF</i><i class="bs">&#9585;</i><i class="k0"></i><i class="p0" style="transform:rotate(-8deg)"></i><i class="l0">Gain 3</i><i class="k1"></i><i class="p1"></i><i class="l1">Q 3</i><i class="k2"></i><i class="p2" style="transform:rotate(-25deg)"></i><i class="l2">Freq 3</i></b><b style="top:921.6px"><i class="bh"></i><i class="bi"></i><i class="bn">2 LMF</i><i class="bs">&#9585;</i><i class="k0"></i><i class="p0" style="transform:rotate(-3deg)"></i><i class="l0">Gain 2</i><i class="k1"></i><i class="p1"></i><i class="l1">Q 2</i><i class="k2"></i><i class="p2" style="transform:rotate(-50deg)"></i><i class="l2">Freq 2</i></b><b style="top:1107.6px"><i class="bh"></i><i class="bi"></i><i class="bn">1 LO</i><i class="bs">&#9585;</i><i class="k0"></i><i class="p0" style="transform:rotate(-65deg)"></i><i class="l0">Gain 1</i><i class="k1"></i><i class="p1"></i><i class="l1">Q 1</i><i class="k2"></i><i class="p2" style="transform:rotate(-80deg)"></i><i class="l2">Freq 1</i></b><i class="f1"></i><i class="f2"></i><i class="f3"></i><i class="f4"></i><i class="f5"></i><i class="b00"></i><i class="d00"></i><i class="b01"></i><i class="d01"></i><i class="b10"></i><i class="d10"></i><i class="b11"></i><i class="d11"></i><i class="b20"></i><i class="d20"></i><i class="b21"></i><i class="d21"></i><i class="b30"></i><i class="d30"></i><i class="b31"></i><i class="d31"></i><i class="ft"></i><i class="m0"></i><i class="m1"></i><i class="m2"></i><i class="m3"></i><i class="m4"></i><i class="m5"></i><i class="m6"></i><i class="m7"></i><i class="m8"></i><i class="fm"></i><i class="g2" style="left:77.6px;top:1492px;height:206px"></i><i class="g2" style="left:98.4px;top:1492px;height:206px"></i><i class="capy" style="top:1468px"></i><i class="fv"></i><i class="fvt">0.00</i><i class="fvu">-7.2</i><i class="fn"></i><i class="fi"></i><i class="fnum">13</i><i class="nm">Oboe II</i><i class="fs"></i></div>
<div class="ch c0" style="left:2113.2px"><i class="mbg"></i><i class="msp"></i><i class="mrt"></i><i class="g1" style="left:10.8px;top:151.2px;height:100.4px"></i><i class="g1" style="left:67.2px;top:146px;height:105.6px"></i><i class="r1"></i><i class="r2"></i><i class="r3"></i><i class="ic"></i><i class="it">INSERTS</i><i class="sc"></i><i class="stx">STRIP</i><i class="s1"></i><i class="s1t">Noise Gate</i><i class="s2"></i><i class="s2t">Standard Com...</i><i class="s3"></i><i class="s3t">EQ</i><b style="top:549.6px"><i class="bh"></i><i class="bi"></i><i class="bn">4 HI</i><i class="bs">&#9585;</i><i class="k0"></i><i class="p0"></i><i class="l0">Gain 4</i><i class="k1"></i><i class="p1"></i><i class="l1">Q 4</i><i class="k2"></i><i class="p2"></i><i class="l2">Freq 4</i></b><b style="top:735.6px"><i class="bh"></i><i class="bi"></i><i class="bn">3 HMF</i><i class="bs">&#9585;</i><i class="k0"></i><i class="p0" style="transform:rotate(-8deg)"></i><i class="l0">Gain 3</i><i class="k1"></i><i class="p1"></i><i class="l1">Q 3</i><i class="k2"></i><i class="p2" style="transform:rotate(-25deg)"></i><i class="l2">Freq 3</i></b><b style="top:921.6px"><i class="bh"></i><i class="bi"></i><i class="bn">2 LMF</i><i class="bs">&#9585;</i><i class="k0"></i><i class="p0" style="transform:rotate(-3deg)"></i><i class="l0">Gain 2</i><i class="k1"></i><i class="p1"></i><i class="l1">Q 2</i><i class="k2"></i><i class="p2" style="transform:rotate(-50deg)"></i><i class="l2">Freq 2</i></b><b style="top:1107.6px"><i class="bh"></i><i class="bi"></i><i class="bn">1 LO</i><i class="bs">&#9585;</i><i class="k0"></i><i class="p0" style="transform:rotate(-65deg)"></i><i class="l0">Gain 1</i><i class="k1"></i><i class="p1"></i><i class="l1">Q 1</i><i class="k2"></i><i class="p2" style="transform:rotate(-80deg)"></i><i class="l2">Freq 1</i></b><i class="f1"></i><i class="f2"></i><i class="f3"></i><i class="f4"></i><i class="f5"></i><i class="b00"></i><i class="d00"></i><i class="b01"></i><i class="d01"></i><i class="b10"></i><i class="d10"></i><i class="b11"></i><i class="d11"></i><i class="b20"></i><i class="d20"></i><i class="b21"></i><i class="d21"></i><i class="b30"></i><i class="d30"></i><i class="b31"></i><i class="d31"></i><i class="ft"></i><i class="m0"></i><i class="m1"></i><i class="m2"></i><i class="m3"></i><i class="m4"></i><i class="m5"></i><i class="m6"></i><i class="m7"></i><i class="m8"></i><i class="fm"></i><i class="g2" style="left:77.6px;top:1518px;height:180px"></i><i class="g2" style="left:98.4px;top:1508px;height:190px"></i><i class="capb" style="top:1551.2px"></i><i class="fv"></i><i class="fvt">-10.4</i><i class="fvu">-7.2</i><i class="fn"></i><i class="fi"></i><i class="fnum">51</i><i class="nm">Strings</i><i class="fs"></i></div>
<div class="ch c1" style="left:2236.28px"><i class="mbg"></i><i class="msp"></i><i class="mrt"></i><i class="g1" style="left:10.8px;top:140px;height:111.6px"></i><i class="g1" style="left:67.2px;top:136.8px;height:114.8px"></i><i class="r1"></i><i class="r2"></i><i class="r3"></i><i class="ic"></i><i class="it">INSERTS</i><i class="sc"></i><i class="stx">STRIP</i><i class="s1"></i><i class="s1t">Noise Gate</i><i class="s2"></i><i class="s2t">Standard Com...</i><i class="s3"></i><i class="s3t">EQ</i><b style="top:549.6px"><i class="bh ba"></i><i class="bk"></i><i class="bk2"></i><i class="bn" style="color:#f0f6fa">4 HI</i><i class="bs">&#9585;</i><i class="k0"></i><i class="p0"></i><i class="l0">Gain 4</i><i class="k1"></i><i class="p1"></i><i class="l1">Q 4</i><i class="k2"></i><i class="p2"></i><i class="l2">Freq 4</i></b><b style="top:735.6px"><i class="bh ba"></i><i class="bk"></i><i class="bk2"></i><i class="bn" style="color:#f0f6fa">3 HMF</i><i class="bs">&#9585;</i><i class="k0"></i><i class="p0" style="transform:rotate(-8deg)"></i><i class="l0">Gain 3</i><i class="k1"></i><i class="p1"></i><i class="l1">Q 3</i><i class="k2"></i><i class="p2" style="transform:rotate(-25deg)"></i><i class="l2">Freq 3</i></b><b style="top:921.6px"><i class="bh ba"></i><i class="bk"></i><i class="bk2"></i><i class="bn" style="color:#f0f6fa">2 LMF</i><i class="bs">&#9585;</i><i class="k0"></i><i class="p0" style="transform:rotate(-3deg)"></i><i class="l0">Gain 2</i><i class="k1"></i><i class="p1"></i><i class="l1">Q 2</i><i class="k2"></i><i class="p2" style="transform:rotate(-50deg)"></i><i class="l2">Freq 2</i></b><b style="top:1107.6px"><i class="bh"></i><i class="bi"></i><i class="bn">1 LO</i><i class="bs">&#9585;</i><i class="k0"></i><i class="p0" style="transform:rotate(-65deg)"></i><i class="l0">Gain 1</i><i class="k1"></i><i class="p1"></i><i class="l1">Q 1</i><i class="k2"></i><i class="p2" style="transform:rotate(-80deg)"></i><i class="l2">Freq 1</i></b><i class="f1"></i><i class="f2"></i><i class="f3"></i><i class="f4"></i><i class="f5"></i><i class="b00"></i><i class="d00"></i><i class="b01"></i><i class="d01"></i><i class="b10"></i><i class="d10"></i><i class="b11"></i><i class="d11"></i><i class="b20"></i><i class="d20"></i><i class="b21"></i><i class="d21"></i><i class="b30"></i><i class="d30"></i><i class="b31"></i><i class="d31"></i><i class="ft"></i><i class="m0"></i><i class="m1"></i><i class="m2"></i><i class="m3"></i><i class="m4"></i><i class="m5"></i><i class="m6"></i><i class="m7"></i><i class="m8"></i><i class="fm"></i><i class="g2" style="left:77.6px;top:1494.4px;height:203.6px"></i><i class="g2" style="left:98.4px;top:1491.2px;height:206.8px"></i><i class="capb" style="top:1530px"></i><i class="fv"></i><i class="fvt">-7.15</i><i class="fvu">-7.2</i><i class="fn"></i><i class="fi"></i><i class="fnum">52</i><i class="nm">Woodwinds</i><i class="fs"></i></div>
<div class="ch c2" style="left:2359.36px"><i class="mbg"></i><i class="msp"></i><i class="mrt"></i><i class="g1" style="left:10.8px;top:160px;height:91.6px"></i><i class="g1" style="left:67.2px;top:160px;height:91.6px"></i><i class="r1"></i><i class="r2"></i><i class="r3"></i><i class="ic"></i><i class="it">INSERTS</i><i class="sc"></i><i class="stx">STRIP</i><i class="s1"></i><i class="s1t">Noise Gate</i><i class="s2"></i><i class="s2t">Standard Com...</i><i class="s3"></i><i class="s3t">EQ</i><b style="top:549.6px"><i class="bh"></i><i class="bi"></i><i class="bn">4 HI</i><i class="bs">&#9585;</i><i class="k0"></i><i class="p0"></i><i class="l0">Gain 4</i><i class="k1"></i><i class="p1"></i><i class="l1">Q 4</i><i class="k2"></i><i class="p2"></i><i class="l2">Freq 4</i></b><b style="top:735.6px"><i class="bh"></i><i class="bi"></i><i class="bn">3 HMF</i><i class="bs">&#9585;</i><i class="k0"></i><i class="p0" style="transform:rotate(-8deg)"></i><i class="l0">Gain 3</i><i class="k1"></i><i class="p1"></i><i class="l1">Q 3</i><i class="k2"></i><i class="p2" style="transform:rotate(-25deg)"></i><i class="l2">Freq 3</i></b><b style="top:921.6px"><i class="bh"></i><i class="bi"></i><i class="bn">2 LMF</i><i class="bs">&#9585;</i><i class="k0"></i><i class="p0" style="transform:rotate(-3deg)"></i><i class="l0">Gain 2</i><i class="k1"></i><i class="p1"></i><i class="l1">Q 2</i><i class="k2"></i><i class="p2" style="transform:rotate(-50deg)"></i><i class="l2">Freq 2</i></b><b style="top:1107.6px"><i class="bh ba"></i><i class="bk"></i><i class="bk2"></i><i class="bn" style="color:#f0f6fa">1 LO</i><i class="bs">&#9585;</i><i class="k0"></i><i class="p0" style="transform:rotate(-65deg)"></i><i class="l0">Gain 1</i><i class="k1"></i><i class="p1"></i><i class="l1">Q 1</i><i class="k2"></i><i class="p2" style="transform:rotate(-80deg)"></i><i class="l2">Freq 1</i></b><i class="f1"></i><i class="f2"></i><i class="f3"></i><i class="f4"></i><i class="f5"></i><i class="b00"></i><i class="d00"></i><i class="b01"></i><i class="d01"></i><i class="b10"></i><i class="d10"></i><i class="b11"></i><i class="d11"></i><i class="b20"></i><i class="d20"></i><i class="b21"></i><i class="d21"></i><i class="b30"></i><i class="d30"></i><i class="b31"></i><i class="d31"></i><i class="ft"></i><i class="m0"></i><i class="m1"></i><i class="m2"></i><i class="m3"></i><i class="m4"></i><i class="m5"></i><i class="m6"></i><i class="m7"></i><i class="m8"></i><i class="fm"></i><i class="g2" style="left:77.6px;top:1531.2px;height:166.8px"></i><i class="g2" style="left:98.4px;top:1531.2px;height:166.8px"></i><i class="capb" style="top:1565.2px"></i><i class="fv"></i><i class="fvt">-12.5</i><i class="fvu">-7.2</i><i class="fn"></i><i class="fi"></i><i class="fnum">53</i><i class="nm">Brass</i><i class="fs"></i></div>
<div class="ch c3" style="left:2482.44px"><i class="mbg"></i><i class="msp"></i><i class="mrt"></i><i class="g1" style="left:10.8px;top:156.4px;height:95.2px"></i><i class="g1" style="left:67.2px;top:154.8px;height:96.8px"></i><i class="r1"></i><i class="r2"></i><i class="r3"></i><i class="ic"></i><i class="it">INSERTS</i><i class="sc"></i><i class="stx">STRIP</i><i class="s1"></i><i class="s1t">Noise Gate</i><i class="s2"></i><i class="s2t">Standard Com...</i><i class="s3"></i><i class="s3t">EQ</i><b style="top:549.6px"><i class="bh ba"></i><i class="bk"></i><i class="bk2"></i><i class="bn" style="color:#f0f6fa">4 HI</i><i class="bs">&#9585;</i><i class="k0"></i><i class="p0"></i><i class="l0">Gain 4</i><i class="k1"></i><i class="p1"></i><i class="l1">Q 4</i><i class="k2"></i><i class="p2"></i><i class="l2">Freq 4</i></b><b style="top:735.6px"><i class="bh"></i><i class="bi"></i><i class="bn">3 HMF</i><i class="bs">&#9585;</i><i class="k0"></i><i class="p0" style="transform:rotate(-8deg)"></i><i class="l0">Gain 3</i><i class="k1"></i><i class="p1"></i><i class="l1">Q 3</i><i class="k2"></i><i class="p2" style="transform:rotate(-25deg)"></i><i class="l2">Freq 3</i></b><b style="top:921.6px"><i class="bh"></i><i class="bi"></i><i class="bn">2 LMF</i><i class="bs">&#9585;</i><i class="k0"></i><i class="p0" style="transform:rotate(-3deg)"></i><i class="l0">Gain 2</i><i class="k1"></i><i class="p1"></i><i class="l1">Q 2</i><i class="k2"></i><i class="p2" style="transform:rotate(-50deg)"></i><i class="l2">Freq 2</i></b><b style="top:1107.6px"><i class="bh"></i><i class="bi"></i><i class="bn">1 LO</i><i class="bs">&#9585;</i><i class="k0"></i><i class="p0" style="transform:rotate(-65deg)"></i><i class="l0">Gain 1</i><i class="k1"></i><i class="p1"></i><i class="l1">Q 1</i><i class="k2"></i><i class="p2" style="transform:rotate(-80deg)"></i><i class="l2">Freq 1</i></b><i class="f1"></i><i class="f2"></i><i class="f3"></i><i class="f4"></i><i class="f5"></i><i class="b00"></i><i class="d00"></i><i class="b01"></i><i class="d01"></i><i class="b10"></i><i class="d10"></i><i class="b11"></i><i class="d11"></i><i class="b20"></i><i class="d20"></i><i class="b21"></i><i class="d21"></i><i class="b30"></i><i class="d30"></i><i class="b31"></i><i class="d31"></i><i class="ft"></i><i class="m0"></i><i class="m1"></i><i class="m2"></i><i class="m3"></i><i class="m4"></i><i class="m5"></i><i class="m6"></i><i class="m7"></i><i class="m8"></i><i class="fm"></i><i class="g2" style="left:77.6px;top:1523.2px;height:174.8px"></i><i class="g2" style="left:98.4px;top:1523.2px;height:174.8px"></i><i class="capb" style="top:1508px"></i><i class="fv"></i><i class="fvt">-2.81</i><i class="fvu">-7.2</i><i class="fn"></i><i class="fi"></i><i class="fnum">54</i><i class="nm">Percussion</i><i class="fs"></i></div>
<div class="ch c4" style="left:2605.52px"><i class="mbg"></i><i class="msp"></i><i class="mrt"></i><i class="g1" style="left:10.8px;top:154.8px;height:96.8px"></i><i class="g1" style="left:67.2px;top:154.8px;height:96.8px"></i><i class="r1"></i><i class="r2"></i><i class="r3"></i><i class="ic"></i><i class="it">INSERTS</i><i class="sc"></i><i class="stx">STRIP</i><i class="s1"></i><i class="s1t">Noise Gate</i><i class="s2"></i><i class="s2t">Standard Com...</i><i class="s3"></i><i class="s3t">EQ</i><b style="top:549.6px"><i class="bh"></i><i class="bi"></i><i class="bn">4 HI</i><i class="bs">&#9585;</i><i class="k0"></i><i class="p0"></i><i class="l0">Gain 4</i><i class="k1"></i><i class="p1"></i><i class="l1">Q 4</i><i class="k2"></i><i class="p2"></i><i class="l2">Freq 4</i></b><b style="top:735.6px"><i class="bh ba"></i><i class="bk"></i><i class="bk2"></i><i class="bn" style="color:#f0f6fa">3 HMF</i><i class="bs">&#9585;</i><i class="k0"></i><i class="p0" style="transform:rotate(-8deg)"></i><i class="l0">Gain 3</i><i class="k1"></i><i class="p1"></i><i class="l1">Q 3</i><i class="k2"></i><i class="p2" style="transform:rotate(-25deg)"></i><i class="l2">Freq 3</i></b><b style="top:921.6px"><i class="bh ba"></i><i class="bk"></i><i class="bk2"></i><i class="bn" style="color:#f0f6fa">2 LMF</i><i class="bs">&#9585;</i><i class="k0"></i><i class="p0" style="transform:rotate(-3deg)"></i><i class="l0">Gain 2</i><i class="k1"></i><i class="p1"></i><i class="l1">Q 2</i><i class="k2"></i><i class="p2" style="transform:rotate(-50deg)"></i><i class="l2">Freq 2</i></b><b style="top:1107.6px"><i class="bh ba"></i><i class="bk"></i><i class="bk2"></i><i class="bn" style="color:#f0f6fa">1 LO</i><i class="bs">&#9585;</i><i class="k0"></i><i class="p0" style="transform:rotate(-65deg)"></i><i class="l0">Gain 1</i><i class="k1"></i><i class="p1"></i><i class="l1">Q 1</i><i class="k2"></i><i class="p2" style="transform:rotate(-80deg)"></i><i class="l2">Freq 1</i></b><i class="f1"></i><i class="f2"></i><i class="f3"></i><i class="f4"></i><i class="f5"></i><i class="b00"></i><i class="d00"></i><i class="b01"></i><i class="d01"></i><i class="b10"></i><i class="d10"></i><i class="b11"></i><i class="d11"></i><i class="b20"></i><i class="d20"></i><i class="b21"></i><i class="d21"></i><i class="b30"></i><i class="d30"></i><i class="b31"></i><i class="d31"></i><i class="ft"></i><i class="m0"></i><i class="m1"></i><i class="m2"></i><i class="m3"></i><i class="m4"></i><i class="m5"></i><i class="m6"></i><i class="m7"></i><i class="m8"></i><i class="fm"></i><i class="g2" style="left:77.6px;top:1523.2px;height:174.8px"></i><i class="g2" style="left:98.4px;top:1523.2px;height:174.8px"></i><i class="capb" style="top:1518px"></i><i class="fv"></i><i class="fvt">-5.60</i><i class="fvu">-7.2</i><i class="fn"></i><i class="fi"></i><i class="fnum">55</i><i class="nm">Synths</i><i class="fs"></i></div>
<div class="ch c5" style="left:2728.6px"><i class="mbg"></i><i class="msp"></i><i class="mrt"></i><i class="r1"></i><i class="r2"></i><i class="r3"></i><i class="ic"></i><i class="it">INSERTS</i><i class="sc"></i><i class="stx">STRIP</i><i class="s1"></i><i class="s1t">Noise Gate</i><i class="s2"></i><i class="s2t">Standard Com...</i><i class="s3"></i><i class="s3t">EQ</i><b style="top:549.6px"><i class="bh"></i><i class="bi"></i><i class="bn">4 HI</i><i class="bs">&#9585;</i><i class="k0"></i><i class="p0"></i><i class="l0">Gain 4</i><i class="k1"></i><i class="p1"></i><i class="l1">Q 4</i><i class="k2"></i><i class="p2"></i><i class="l2">Freq 4</i></b><b style="top:735.6px"><i class="bh"></i><i class="bi"></i><i class="bn">3 HMF</i><i class="bs">&#9585;</i><i class="k0"></i><i class="p0" style="transform:rotate(-8deg)"></i><i class="l0">Gain 3</i><i class="k1"></i><i class="p1"></i><i class="l1">Q 3</i><i class="k2"></i><i class="p2" style="transform:rotate(-25deg)"></i><i class="l2">Freq 3</i></b><b style="top:921.6px"><i class="bh"></i><i class="bi"></i><i class="bn">2 LMF</i><i class="bs">&#9585;</i><i class="k0"></i><i class="p0" style="transform:rotate(-3deg)"></i><i class="l0">Gain 2</i><i class="k1"></i><i class="p1"></i><i class="l1">Q 2</i><i class="k2"></i><i class="p2" style="transform:rotate(-50deg)"></i><i class="l2">Freq 2</i></b><b style="top:1107.6px"><i class="bh"></i><i class="bi"></i><i class="bn">1 LO</i><i class="bs">&#9585;</i><i class="k0"></i><i class="p0" style="transform:rotate(-65deg)"></i><i class="l0">Gain 1</i><i class="k1"></i><i class="p1"></i><i class="l1">Q 1</i><i class="k2"></i><i class="p2" style="transform:rotate(-80deg)"></i><i class="l2">Freq 1</i></b><i class="f1"></i><i class="f2"></i><i class="f3"></i><i class="f4"></i><i class="f5"></i><i class="b00"></i><i class="d00"></i><i class="b01"></i><i class="d01"></i><i class="b10"></i><i class="d10"></i><i class="b11"></i><i class="d11"></i><i class="b20"></i><i class="d20"></i><i class="b21"></i><i class="d21"></i><i class="b30"></i><i class="d30"></i><i class="b31"></i><i class="d31"></i><i class="ft"></i><i class="m0"></i><i class="m1"></i><i class="m2"></i><i class="m3"></i><i class="m4"></i><i class="m5"></i><i class="m6"></i><i class="m7"></i><i class="m8"></i><i class="fm"></i><i class="capb" style="top:1469.2px"></i><i class="fv"></i><i class="fvt">0.00</i><i class="fvu">-oo</i><i class="fn"></i><i class="fi"></i><i class="fnum">56</i><i class="nm">Samples</i><i class="fs"></i></div>
<div class="ch c6" style="left:2851.68px"><i class="mbg"></i><i class="msp"></i><i class="mrt"></i><i class="r1"></i><i class="r2"></i><i class="r3"></i><i class="ic"></i><i class="it">INSERTS</i><i class="sc"></i><i class="stx">STRIP</i><i class="s1"></i><i class="s1t">Noise Gate</i><i class="s2"></i><i class="s2t">Standard Com...</i><i class="s3"></i><i class="s3t">EQ</i><b style="top:549.6px"><i class="bh"></i><i class="bi"></i><i class="bn">4 HI</i><i class="bs">&#9585;</i><i class="k0"></i><i class="p0"></i><i class="l0">Gain 4</i><i class="k1"></i><i class="p1"></i><i class="l1">Q 4</i><i class="k2"></i><i class="p2"></i><i class="l2">Freq 4</i></b><b style="top:735.6px"><i class="bh"></i><i class="bi"></i><i class="bn">3 HMF</i><i class="bs">&#9585;</i><i class="k0"></i><i class="p0" style="transform:rotate(-8deg)"></i><i class="l0">Gain 3</i><i class="k1"></i><i class="p1"></i><i class="l1">Q 3</i><i class="k2"></i><i class="p2" style="transform:rotate(-25deg)"></i><i class="l2">Freq 3</i></b><b style="top:921.6px"><i class="bh"></i><i class="bi"></i><i class="bn">2 LMF</i><i class="bs">&#9585;</i><i class="k0"></i><i class="p0" style="transform:rotate(-3deg)"></i><i class="l0">Gain 2</i><i class="k1"></i><i class="p1"></i><i class="l1">Q 2</i><i class="k2"></i><i class="p2" style="transform:rotate(-50deg)"></i><i class="l2">Freq 2</i></b><b style="top:1107.6px"><i class="bh"></i><i class="bi"></i><i class="bn">1 LO</i><i class="bs">&#9585;</i><i class="k0"></i><i class="p0" style="transform:rotate(-65deg)"></i><i class="l0">Gain 1</i><i class="k1"></i><i class="p1"></i><i class="l1">Q 1</i><i class="k2"></i><i class="p2" style="transform:rotate(-80deg)"></i><i class="l2">Freq 1</i></b><i class="f1"></i><i class="f2"></i><i class="f3"></i><i class="f4"></i><i class="f5"></i><i class="b00"></i><i class="d00"></i><i class="b01"></i><i class="d01"></i><i class="b10"></i><i class="d10"></i><i class="b11"></i><i class="d11"></i><i class="b20"></i><i class="d20"></i><i class="b21"></i><i class="d21"></i><i class="b30"></i><i class="d30"></i><i class="b31"></i><i class="d31"></i><i class="ft"></i><i class="m0"></i><i class="m1"></i><i class="m2"></i><i class="m3"></i><i class="m4"></i><i class="m5"></i><i class="m6"></i><i class="m7"></i><i class="m8"></i><i class="fm"></i><i class="capb" style="top:1469.2px"></i><i class="fv"></i><i class="fvt">0.00</i><i class="fvu">-oo</i><i class="fn"></i><i class="fi"></i><i class="fnum">57</i><i class="nm">Drums</i><i class="fs"></i></div>
<div class="ch c7" style="left:2974.76px"><i class="mbg"></i><i class="msp"></i><i class="mrt"></i><i class="g1" style="left:10.8px;top:149.6px;height:102px"></i><i class="g1" style="left:67.2px;top:149.6px;height:102px"></i><i class="r1"></i><i class="r2"></i><i class="r3"></i><i class="ic"></i><i class="it">INSERTS</i><i class="sc"></i><i class="stx">STRIP</i><i class="s1g"></i><i class="s1gt">Gate</i><i class="s2g"></i><i class="s2gt">Comp</i><i class="s3"></i><i class="s3t">EQ</i><b style="top:549.6px"><i class="bh"></i><i class="bi"></i><i class="bn">4 HI</i><i class="bs">&#9585;</i><i class="k0"></i><i class="p0"></i><i class="l0">Gain 4</i><i class="k1"></i><i class="p1"></i><i class="l1">Q 4</i><i class="k2"></i><i class="p2"></i><i class="l2">Freq 4</i></b><b style="top:735.6px"><i class="bh"></i><i class="bi"></i><i class="bn">3 HMF</i><i class="bs">&#9585;</i><i class="k0"></i><i class="p0" style="transform:rotate(-8deg)"></i><i class="l0">Gain 3</i><i class="k1"></i><i class="p1"></i><i class="l1">Q 3</i><i class="k2"></i><i class="p2" style="transform:rotate(-25deg)"></i><i class="l2">Freq 3</i></b><b style="top:921.6px"><i class="bh"></i><i class="bi"></i><i class="bn">2 LMF</i><i class="bs">&#9585;</i><i class="k0"></i><i class="p0" style="transform:rotate(-3deg)"></i><i class="l0">Gain 2</i><i class="k1"></i><i class="p1"></i><i class="l1">Q 2</i><i class="k2"></i><i class="p2" style="transform:rotate(-50deg)"></i><i class="l2">Freq 2</i></b><b style="top:1107.6px"><i class="bh"></i><i class="bi"></i><i class="bn">1 LO</i><i class="bs">&#9585;</i><i class="k0"></i><i class="p0" style="transform:rotate(-65deg)"></i><i class="l0">Gain 1</i><i class="k1"></i><i class="p1"></i><i class="l1">Q 1</i><i class="k2"></i><i class="p2" style="transform:rotate(-80deg)"></i><i class="l2">Freq 1</i></b><i class="f1"></i><i class="f2"></i><i class="f3"></i><i class="f4"></i><i class="f5"></i><i class="b00"></i><i class="d00"></i><i class="b01"></i><i class="d01"></i><i class="b10"></i><i class="d10"></i><i class="b11" style="background:#3aaedb"></i><i class="d11"></i><i class="b20"></i><i class="d20"></i><i class="b21"></i><i class="d21"></i><i class="b30"></i><i class="d30"></i><i class="b31"></i><i class="d31"></i><i class="ft"></i><i class="m0"></i><i class="m1"></i><i class="m2"></i><i class="m3"></i><i class="m4"></i><i class="m5"></i><i class="m6"></i><i class="m7"></i><i class="m8"></i><i class="fm"></i><i class="g2" style="left:77.6px;top:1513.2px;height:184.8px"></i><i class="g2" style="left:98.4px;top:1513.2px;height:184.8px"></i><i class="capr" style="top:1544.4px"></i><i class="fv"></i><i class="fvt">-6.71</i><i class="fvu">-7.2</i><i class="fn"></i><i class="fi"></i><i class="fnum"></i><i class="so"></i><i class="sot">Stereo Out</i><i class="fs"></i></div>
<svg style="left:0;top:0;width:3400px;height:1912px" viewBox="0 0 850 478"><g fill="none" stroke="#2c7ab8" stroke-width="1.3" stroke-linejoin="round"><path d="M104.9,85.5 C108.9,83 110.9,79.6 115.9,79.3 L135.8,79.3"/><path d="M135.7,85.5 C139.7,83 141.7,79.6 146.7,79.3 L166.5,79.3"/><path d="M166.4,85.5 C170.4,83 172.4,79.6 177.4,79.3 L197.3,79.3"/><path d="M197.2,85.5 C201.2,83 203.2,79.6 208.2,79.3 L228.1,79.3"/><path d="M228.0,85.5 C232.0,83 234.0,79.6 239.0,79.3 L258.8,79.3"/><path d="M258.8,79.3 L260.8,78.8 L262.9,75.4 C267.8,79 274.8,80 279.8,85 S284.8,89 286.8,89.3"/><path d="M289.5,79.3 L320.4,79.3"/><path d="M320.3,79.3 L351.2,79.3"/><path d="M351.1,79.3 L381.9,79.3"/><path d="M381.8,85.5 C385.8,83 387.8,79.6 392.8,79.3 L412.7,79.3"/><path d="M412.6,80.8 C416.6,79.0 419.6,78.3 421.6,80.3 C424.6,78.3 426.6,78.5 428.6,80.1 C432.6,78.3 436.6,79.1 443.5,79.3"/><path d="M443.4,85.5 C447.4,83 449.4,79.6 454.4,79.3 L474.2,79.3"/><path d="M474.1,79.3 L505.0,79.3"/><path d="M529.2,79.3 L560.1,79.3"/><path d="M560.0,79.3 L566.0,79.3 C568.0,76.7 569.0,77.3 570.5,79.0 C572.5,81.3 576.0,81.1 581.0,81.2 S594.0,80.1 599.0,79.3"/><path d="M598.7,79.3 L621.6,79.3"/><path d="M621.5,79.3 L652.4,79.3"/><path d="M652.3,79.3 C658.3,78.1 662.3,78.3 666.3,80.5 C669.3,81.8 670.3,78.8 672.3,80.8 C675.3,81.3 676.3,79.0 683.1,79.3"/><path d="M683.0,79.3 L713.9,79.3"/><path d="M713.8,79.3 L744.7,79.3"/><path d="M744.6,79.3 L775.5,79.3"/></g></svg>
<div style="left:3122.4px;top:118px;width:284px;height:1760px;background:#2d2f35;border:3.2px solid #46484e;border-radius:8px;box-sizing:border-box"></div>
<div style="left:3122.4px;top:88px;width:161.6px;height:32px;background:#08080a;"></div>
<div style="left:3284px;top:88px;width:124px;height:36px;background:#2d2f35;border:3.2px solid #46484e;border-bottom:none;border-radius:8px 8px 0 0;box-sizing:border-box"></div>
<div style="left:3192px;top:94.4px;font-size:16px;line-height:19.2px;color:#e0e0e0;white-space:nowrap;font-weight:bold;-webkit-text-stroke:0.48px;">CR</div>
<div style="left:3328px;top:94.4px;font-size:16px;line-height:19.2px;color:#f4f4f4;white-space:nowrap;font-weight:bold;-webkit-text-stroke:0.48px;">Meter</div>
<div style="left:3130px;top:134px;width:276px;height:28px;background:#4b4e54;border-radius:4px"></div>
<div style="left:3140px;top:140.8px;width:0;height:0;border-top:7.6px solid transparent;border-bottom:7.6px solid transparent;border-left:12px solid #f0f0f0"></div>
<div style="left:3162px;top:138.88px;font-size:15.2px;line-height:18.24px;color:#cfd0d2;white-space:nowrap;font-weight:bold;-webkit-text-stroke:0.48px;">Master</div>
<div style="left:3130px;top:189.2px;width:276px;height:21.6px;background:#060607;"></div>
<div style="left:3166px;top:191.36px;font-size:14.4px;line-height:17.28px;color:#f0f0f0;white-space:nowrap;font-weight:bold;-webkit-text-stroke:0.48px;">Digital Scale</div>
<div style="left:3332px;top:192.8px;font-size:12px;line-height:14.4px;color:#8a8c90;white-space:nowrap;-webkit-text-stroke:0.4px;">+3 dBFS</div>
<div style="left:3132px;top:217.6px;width:145.2px;height:20.8px;background:#7b7e83;"></div>
<div style="left:3283.2px;top:217.6px;width:120px;height:20.8px;background:#7b7e83;"></div>
<div style="left:3200px;top:224px;width:8.8px;height:8.8px;background:#2a2b2e;"></div>
<div style="left:3344px;top:226px;width:16px;height:4.8px;background:#2a2b2e;"></div>
<div style="left:3212.8px;top:272.8px;width:143.2px;height:1485.2px;background:#030304;"></div>
<div style="left:3216px;top:715.6px;width:66.4px;height:1042px;background:linear-gradient(#40f0bc 0%,#40f0be 30.2%,#40ead0 47.7%,#48e0e6 63.8%,#4ad8fa 90.7%,#4ad6fc 100%);background-size:100% 1485.6px;background-position:bottom"></div>
<div style="left:3286.8px;top:748.8px;width:66.8px;height:1008.8px;background:linear-gradient(#40f0bc 0%,#40f0be 30.2%,#40ead0 47.7%,#48e0e6 63.8%,#4ad8fa 90.7%,#4ad6fc 100%);background-size:100% 1485.6px;background-position:bottom"></div>
<div style="left:3216px;top:1129.2px;width:66.4px;height:3.2px;background:#2a9a9a;"></div>
<div style="left:3286.8px;top:1103.2px;width:66.8px;height:3.2px;background:#2a9a9a;"></div>
<div style="left:3218px;top:454.8px;width:64px;height:3.2px;background:#5a6470;"></div>
<div style="left:3288px;top:439.2px;width:64px;height:3.2px;background:#5a6470;"></div>
<div style="left:3218px;top:654px;width:64px;height:3.2px;background:#2d4fa0;"></div>
<div style="left:3288px;top:684px;width:64px;height:3.2px;background:#2d4fa0;"></div>
<div style="left:3154px;top:264.16px;font-size:16.4px;line-height:19.68px;color:#ececee;white-space:nowrap;font-weight:bold;-webkit-text-stroke:0.48px;width:38px;text-align:right;">0</div>
<div style="left:3196px;top:272.8px;width:10px;height:2.4px;background:#9a9ca0;"></div>
<div style="left:3372.8px;top:264.16px;font-size:16.4px;line-height:19.68px;color:#ececee;white-space:nowrap;font-weight:bold;-webkit-text-stroke:0.48px;width:36px;text-align:left;">0</div>
<div style="left:3360.8px;top:272.8px;width:8.8px;height:2.4px;background:#9a9ca0;"></div>
<div style="left:3154px;top:446.16px;font-size:16.4px;line-height:19.68px;color:#ececee;white-space:nowrap;font-weight:bold;-webkit-text-stroke:0.48px;width:38px;text-align:right;">5</div>
<div style="left:3196px;top:454.8px;width:10px;height:2.4px;background:#9a9ca0;"></div>
<div style="left:3372.8px;top:446.16px;font-size:16.4px;line-height:19.68px;color:#ececee;white-space:nowrap;font-weight:bold;-webkit-text-stroke:0.48px;width:36px;text-align:left;">5</div>
<div style="left:3360.8px;top:454.8px;width:8.8px;height:2.4px;background:#9a9ca0;"></div>
<div style="left:3154px;top:630.16px;font-size:16.4px;line-height:19.68px;color:#ececee;white-space:nowrap;font-weight:bold;-webkit-text-stroke:0.48px;width:38px;text-align:right;">10</div>
<div style="left:3196px;top:638.8px;width:10px;height:2.4px;background:#9a9ca0;"></div>
<div style="left:3372.8px;top:630.16px;font-size:16.4px;line-height:19.68px;color:#ececee;white-space:nowrap;font-weight:bold;-webkit-text-stroke:0.48px;width:36px;text-align:left;">10</div>
<div style="left:3360.8px;top:638.8px;width:8.8px;height:2.4px;background:#9a9ca0;"></div>
<div style="left:3154px;top:811.36px;font-size:16.4px;line-height:19.68px;color:#ececee;white-space:nowrap;font-weight:bold;-webkit-text-stroke:0.48px;width:38px;text-align:right;">15</div>
<div style="left:3196px;top:820px;width:10px;height:2.4px;background:#9a9ca0;"></div>
<div style="left:3372.8px;top:811.36px;font-size:16.4px;line-height:19.68px;color:#ececee;white-space:nowrap;font-weight:bold;-webkit-text-stroke:0.48px;width:36px;text-align:left;">15</div>
<div style="left:3360.8px;top:820px;width:8.8px;height:2.4px;background:#9a9ca0;"></div>
<div style="left:3154px;top:990.16px;font-size:16.4px;line-height:19.68px;color:#ececee;white-space:nowrap;font-weight:bold;-webkit-text-stroke:0.48px;width:38px;text-align:right;">20</div>
<div style="left:3196px;top:998.8px;width:10px;height:2.4px;background:#9a9ca0;"></div>
<div style="left:3372.8px;top:990.16px;font-size:16.4px;line-height:19.68px;color:#ececee;white-space:nowrap;font-weight:bold;-webkit-text-stroke:0.48px;width:36px;text-align:left;">20</div>
<div style="left:3360.8px;top:998.8px;width:8.8px;height:2.4px;background:#9a9ca0;"></div>
<div style="left:3154px;top:1143.36px;font-size:16.4px;line-height:19.68px;color:#ececee;white-space:nowrap;font-weight:bold;-webkit-text-stroke:0.48px;width:38px;text-align:right;">25</div>
<div style="left:3196px;top:1152px;width:10px;height:2.4px;background:#9a9ca0;"></div>
<div style="left:3372.8px;top:1143.36px;font-size:16.4px;line-height:19.68px;color:#ececee;white-space:nowrap;font-weight:bold;-webkit-text-stroke:0.48px;width:36px;text-align:left;">25</div>
<div style="left:3360.8px;top:1152px;width:8.8px;height:2.4px;background:#9a9ca0;"></div>
<div style="left:3154px;top:1328.16px;font-size:16.4px;line-height:19.68px;color:#ececee;white-space:nowrap;font-weight:bold;-webkit-text-stroke:0.48px;width:38px;text-align:right;">30</div>
<div style="left:3196px;top:1336.8px;width:10px;height:2.4px;background:#9a9ca0;"></div>
<div style="left:3372.8px;top:1328.16px;font-size:16.4px;line-height:19.68px;color:#ececee;white-space:nowrap;font-weight:bold;-webkit-text-stroke:0.48px;width:36px;text-align:left;">30</div>
<div style="left:3360.8px;top:1336.8px;width:8.8px;height:2.4px;background:#9a9ca0;"></div>
<div style="left:3154px;top:1398.16px;font-size:16.4px;line-height:19.68px;color:#ececee;white-space:nowrap;font-weight:bold;-webkit-text-stroke:0.48px;width:38px;text-align:right;">35</div>
<div style="left:3196px;top:1406.8px;width:10px;height:2.4px;background:#9a9ca0;"></div>
<div style="left:3372.8px;top:1398.16px;font-size:16.4px;line-height:19.68px;color:#ececee;white-space:nowrap;font-weight:bold;-webkit-text-stroke:0.48px;width:36px;text-align:left;">35</div>
<div style="left:3360.8px;top:1406.8px;width:8.8px;height:2.4px;background:#9a9ca0;"></div>
<div style="left:3154px;top:1493.36px;font-size:16.4px;line-height:19.68px;color:#ececee;white-space:nowrap;font-weight:bold;-webkit-text-stroke:0.48px;width:38px;text-align:right;">40</div>
<div style="left:3196px;top:1502px;width:10px;height:2.4px;background:#9a9ca0;"></div>
<div style="left:3372.8px;top:1493.36px;font-size:16.4px;line-height:19.68px;color:#ececee;white-space:nowrap;font-weight:bold;-webkit-text-stroke:0.48px;width:36px;text-align:left;">40</div>
<div style="left:3360.8px;top:1502px;width:8.8px;height:2.4px;background:#9a9ca0;"></div>
<div style="left:3154px;top:1640.56px;font-size:16.4px;line-height:19.68px;color:#ececee;white-space:nowrap;font-weight:bold;-webkit-text-stroke:0.48px;width:38px;text-align:right;">50</div>
<div style="left:3196px;top:1649.2px;width:10px;height:2.4px;background:#9a9ca0;"></div>
<div style="left:3372.8px;top:1640.56px;font-size:16.4px;line-height:19.68px;color:#ececee;white-space:nowrap;font-weight:bold;-webkit-text-stroke:0.48px;width:36px;text-align:left;">50</div>
<div style="left:3360.8px;top:1649.2px;width:8.8px;height:2.4px;background:#9a9ca0;"></div>
<div style="left:3154px;top:1700.56px;font-size:16.4px;line-height:19.68px;color:#ececee;white-space:nowrap;font-weight:bold;-webkit-text-stroke:0.48px;width:38px;text-align:right;">60</div>
<div style="left:3196px;top:1709.2px;width:10px;height:2.4px;background:#9a9ca0;"></div>
<div style="left:3372.8px;top:1700.56px;font-size:16.4px;line-height:19.68px;color:#ececee;white-space:nowrap;font-weight:bold;-webkit-text-stroke:0.48px;width:36px;text-align:left;">60</div>
<div style="left:3360.8px;top:1709.2px;width:8.8px;height:2.4px;background:#9a9ca0;"></div>
<div style="left:3132.8px;top:1792.8px;width:272px;height:62.8px;background:#060607;"></div>
<div style="left:3185.6px;top:1806.24px;font-size:13.6px;line-height:16.32px;color:#f0f0f0;white-space:nowrap;font-weight:bold;-webkit-text-stroke:0.48px;width:80px;text-align:center;">RMS Max</div>
<div style="left:3185.6px;top:1829.84px;font-size:13.6px;line-height:16.32px;color:#f0f0f0;white-space:nowrap;font-weight:bold;-webkit-text-stroke:0.48px;width:80px;text-align:center;">-10.5</div>
<div style="left:3300px;top:1806.24px;font-size:13.6px;line-height:16.32px;color:#f0f0f0;white-space:nowrap;font-weight:bold;-webkit-text-stroke:0.48px;width:80px;text-align:center;">Peak Max</div>
<div style="left:3300px;top:1829.84px;font-size:13.6px;line-height:16.32px;color:#f0f0f0;white-space:nowrap;font-weight:bold;-webkit-text-stroke:0.48px;width:80px;text-align:center;">-4.4</div>
<div style="left:3120px;top:1878.4px;width:288px;height:33.6px;background:#08080a;"></div>
<div style="left:3130.4px;top:1876px;width:153.6px;height:38px;background:#2d2f35;border:3.2px solid #46484e;border-top:none;border-radius:0 0 8px 8px;box-sizing:border-box"></div>
<div style="left:3287.2px;top:1880px;width:120px;height:36px;background:#050506;border:3.2px solid #55575d;border-radius:8px 8px 0 0;box-sizing:border-box"></div>
<div style="left:3178px;top:1887.68px;font-size:15.2px;line-height:18.24px;color:#f0f0f0;white-space:nowrap;font-weight:bold;-webkit-text-stroke:0.48px;">Master</div>
<div style="left:3332px;top:1887.68px;font-size:15.2px;line-height:18.24px;color:#c8c8ca;white-space:nowrap;font-weight:bold;-webkit-text-stroke:0.48px;">Loudness</div>
</div></div></body></html>
